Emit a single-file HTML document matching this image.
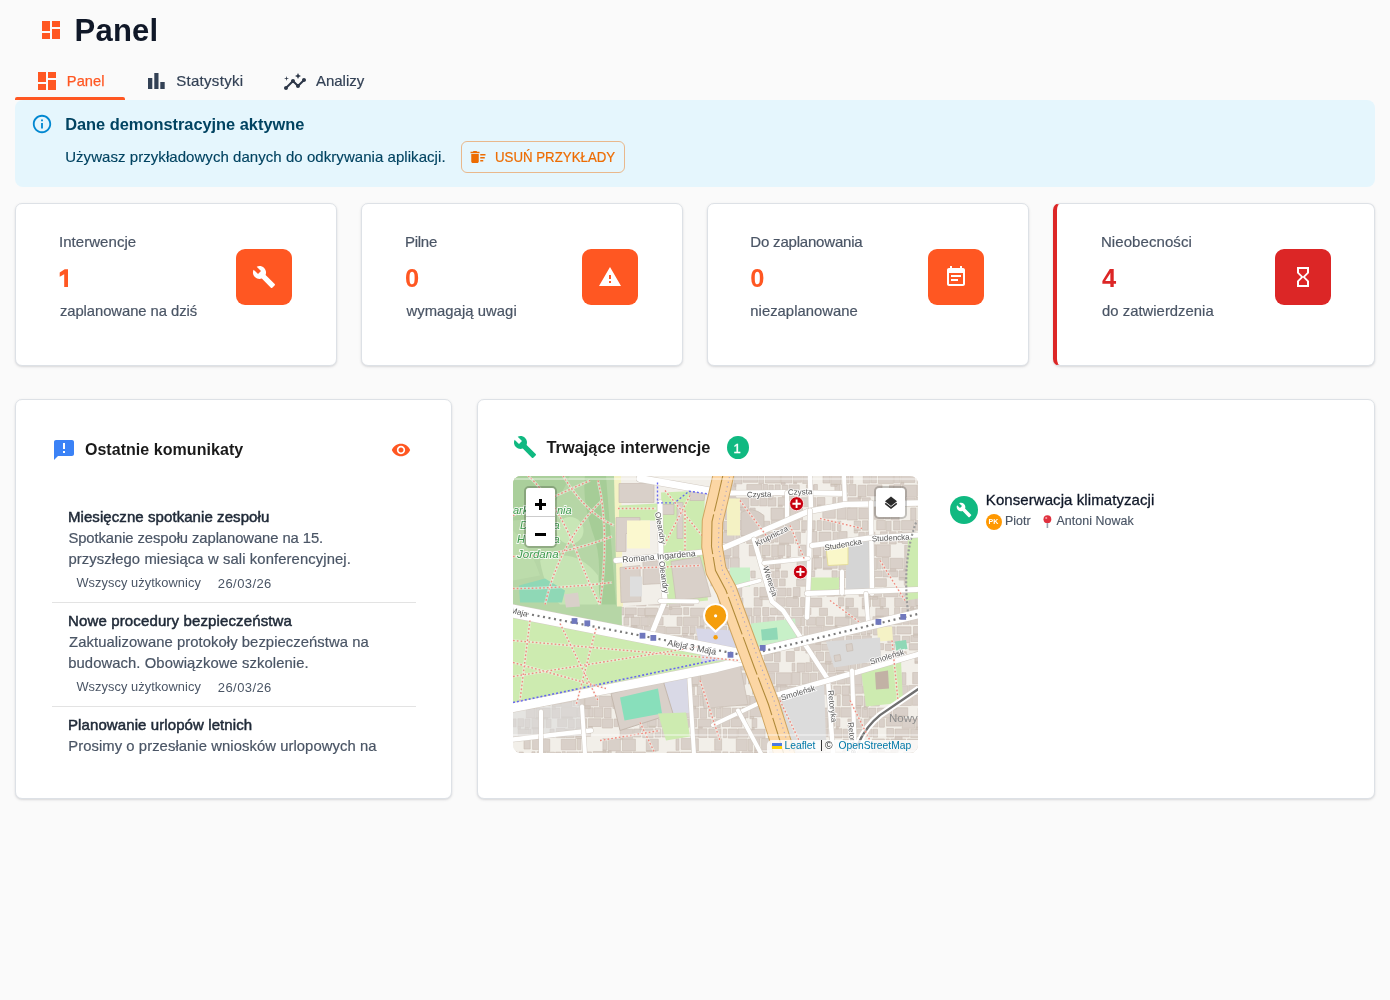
<!DOCTYPE html>
<html><head><meta charset="utf-8"><title>Panel</title>
<style>
html,body{margin:0;padding:0}
body{width:1390px;height:1000px;background:#fafafa;position:relative;overflow:hidden;font-family:"Liberation Sans",sans-serif}
.t,.mt{position:absolute;line-height:1;white-space:nowrap}
.abs{position:absolute;box-sizing:border-box}
.ic{position:absolute;display:block}
.card{position:absolute;box-sizing:border-box;background:#fff;border:1px solid #dde1e6;border-radius:7px;box-shadow:0 1px 3px rgba(16,24,40,0.10),0 1px 2px rgba(16,24,40,0.06)}
</style></head><body>
<div id="root" style="position:absolute;left:0;top:0;width:1390px;height:1000px;will-change:transform">
<svg class="ic" style="left:39px;top:18px" width="24" height="24" viewBox="0 0 24 24"><path fill="#ff5722" d="M3 13h8V3H3v10zm0 8h8v-6H3v6zm10 0h8V11h-8v10zm0-18v6h8V3h-8z"/></svg>
<div class="t" style="left:74.60px;top:14.75px;font-size:31px;color:#101828;font-weight:bold;letter-spacing:0.225px;">Panel</div>
<svg class="ic" style="left:35px;top:69px" width="24" height="24" viewBox="0 0 24 24"><path fill="#ff5722" d="M3 13h8V3H3v10zm0 8h8v-6H3v6zm10 0h8V11h-8v10zm0-18v6h8V3h-8z"/></svg>
<div class="t" style="left:66.80px;top:73.64px;font-size:14.6px;color:#ff5722;font-weight:normal;letter-spacing:0.113px;-webkit-text-stroke:0.25px #ff5722;">Panel</div>
<svg class="ic" style="left:148px;top:72.5px" width="17" height="16" viewBox="0 0 17 16"><path fill="#334155" d="M0 5.1h4.3V16H0zM6.3 0h4.2v16H6.3zM12.3 9.1h4.4V16h-4.4z"/></svg>
<div class="t" style="left:176.20px;top:73.30px;font-size:15px;color:#334155;font-weight:normal;letter-spacing:0.300px;-webkit-text-stroke:0.2px #334155;">Statystyki</div>
<svg class="ic" style="left:283px;top:69.6px" width="24" height="24" viewBox="0 0 24 24"><path fill="#2d3748" d="M21 8c-1.45 0-2.26 1.44-1.93 2.51l-3.55 3.56c-.3-.09-.74-.09-1.04 0l-2.55-2.55C12.27 10.45 11.46 9 10 9c-1.45 0-2.27 1.44-1.93 2.52l-4.56 4.55C2.44 15.74 1 16.55 1 18c0 1.1.9 2 2 2 1.45 0 2.26-1.44 1.93-2.51l4.55-4.56c.3.09.74.09 1.04 0l2.55 2.55C12.73 16.55 13.54 18 15 18c1.45 0 2.27-1.44 1.93-2.52l3.56-3.55c1.07.33 2.51-.49 2.51-1.93 0-1.1-.9-2-2-2zM15 9l.94-2.07L18 6l-2.06-.93L15 3l-.92 2.07L12 6l2.08.93zM3.5 11 4 9l2-.5L4 8l-.5-2L3 8l-2 .5L3 9z"/></svg>
<div class="t" style="left:315.90px;top:73.10px;font-size:15px;color:#334155;font-weight:normal;-webkit-text-stroke:0.2px #334155;">Analizy</div>
<div class="abs" style="left:15px;top:97px;width:109.5px;height:3px;background:#ff5722;border-radius:2px 2px 0 0"></div>
<div class="abs" style="left:15px;top:100px;width:1360px;height:86.7px;background:#e5f6fd;border-radius:8px"></div>
<svg class="ic" style="left:31px;top:113px" width="22" height="22" viewBox="0 0 24 24"><path fill="#0288d1" d="M11 7h2v2h-2zm0 4h2v6h-2zm1-9C6.48 2 2 6.48 2 12s4.48 10 10 10 10-4.48 10-10S17.52 2 12 2zm0 18c-4.41 0-8-3.59-8-8s3.59-8 8-8 8 3.59 8 8-3.59 8-8 8z"/></svg>
<div class="t" style="left:65.20px;top:116.11px;font-size:16.4px;color:#014361;font-weight:bold;letter-spacing:-0.017px;">Dane demonstracyjne aktywne</div>
<div class="t" style="left:65.20px;top:149.20px;font-size:15px;color:#014361;font-weight:normal;letter-spacing:0.052px;-webkit-text-stroke:0.15px #014361;">Używasz przykładowych danych do odkrywania aplikacji.</div>
<div class="abs" style="left:461px;top:141px;width:163.7px;height:31.6px;border:1px solid rgba(237,108,2,0.45);border-radius:6px"></div>
<svg class="ic" style="left:469px;top:148px" width="18" height="18" viewBox="0 0 24 24"><path fill="#ed6c02" d="M15 16h4v2h-4zm0-8h7v2h-7zm0 4h6v2h-6zM3 18c0 1.1.9 2 2 2h6c1.1 0 2-.9 2-2V8H3v10zM14 5h-3l-1-1H6L5 5H2v2h12z"/></svg>
<div class="t" style="left:495.30px;top:150.18px;font-size:14.2px;color:#ed6c02;font-weight:normal;-webkit-text-stroke:0.2px #ed6c02;transform:scaleX(0.935);transform-origin:0 0;">USUŃ PRZYKŁADY</div>
<div class="card" style="left:15px;top:203px;width:322px;height:163px;"></div>
<div class="t" style="left:59.00px;top:234.20px;font-size:15px;color:#4a5565;font-weight:normal;letter-spacing:0.045px;-webkit-text-stroke:0.2px #4a5565;">Interwencje</div>
<div class="t" style="display:none">1</div>
<svg class="ic" style="left:0;top:0" width="100" height="300" viewBox="0 0 100 300"><path fill="#ff5722" d="M64.2 269.2H68V287.1H64.2V274.2L59.7 276.7V272.6L64.7 269.2Z"/></svg>
<div class="t" style="left:59.90px;top:304.17px;font-size:14.8px;color:#4a5565;font-weight:normal;letter-spacing:-0.050px;-webkit-text-stroke:0.2px #4a5565;">zaplanowane na dziś</div>
<div class="abs" style="left:235.70px;top:248.7px;width:56px;height:56px;border-radius:9px;background:#ff5722"></div>
<svg class="ic" style="left:251.70px;top:264.7px" width="24" height="24" viewBox="0 0 24 24"><path fill="#fff" d="M22.7 19l-9.1-9.1c.9-2.3.4-5-1.5-6.9-2-2-5-2.4-7.4-1.3L9 6 6 9 1.6 4.7C.4 7.1.9 10.1 2.9 12.1c1.9 1.9 4.6 2.4 6.9 1.5l9.1 9.1c.4.4 1 .4 1.4 0l2.3-2.3c.5-.4.5-1.1.1-1.4z"/></svg>
<div class="card" style="left:361.2px;top:203px;width:322px;height:163px;"></div>
<div class="t" style="left:404.88px;top:234.20px;font-size:15px;color:#4a5565;font-weight:normal;letter-spacing:-0.225px;-webkit-text-stroke:0.2px #4a5565;">Pilne</div>
<div class="t" style="left:404.88px;top:265.51px;font-size:25.5px;color:#ff5722;font-weight:bold;">0</div>
<div class="t" style="left:406.41px;top:304.17px;font-size:14.8px;color:#4a5565;font-weight:normal;letter-spacing:0.069px;-webkit-text-stroke:0.2px #4a5565;">wymagają uwagi</div>
<div class="abs" style="left:582.03px;top:248.7px;width:56px;height:56px;border-radius:9px;background:#ff5722"></div>
<svg class="ic" style="left:598.03px;top:264.7px" width="24" height="24" viewBox="0 0 24 24"><path fill="#fff" d="M1 21h22L12 2 1 21zm12-3h-2v-2h2v2zm0-4h-2v-4h2v4z"/></svg>
<div class="card" style="left:706.5px;top:203px;width:322px;height:163px;"></div>
<div class="t" style="left:750.32px;top:234.20px;font-size:15px;color:#4a5565;font-weight:normal;letter-spacing:-0.193px;-webkit-text-stroke:0.2px #4a5565;">Do zaplanowania</div>
<div class="t" style="left:750.32px;top:265.51px;font-size:25.5px;color:#ff5722;font-weight:bold;">0</div>
<div class="t" style="left:750.32px;top:304.17px;font-size:14.8px;color:#4a5565;font-weight:normal;letter-spacing:0.035px;-webkit-text-stroke:0.2px #4a5565;">niezaplanowane</div>
<div class="abs" style="left:928.37px;top:248.7px;width:56px;height:56px;border-radius:9px;background:#ff5722"></div>
<svg class="ic" style="left:944.37px;top:264.7px" width="24" height="24" viewBox="0 0 24 24"><path fill="#fff" d="M17 10H7v2h10v-2zm2-7h-1V1h-2v2H8V1H6v2H5c-1.11 0-1.99.9-1.99 2L3 19c0 1.1.89 2 2 2h14c1.1 0 2-.9 2-2V5c0-1.1-.9-2-2-2zm0 16H5V8h14v11zm-5-5H7v2h7v-2z"/></svg>
<div class="card" style="left:1052.9px;top:203px;width:322.1px;height:163px;border-left:4px solid #dc2626;"></div>
<div class="t" style="left:1100.88px;top:234.20px;font-size:15px;color:#4a5565;font-weight:normal;letter-spacing:0.082px;-webkit-text-stroke:0.2px #4a5565;">Nieobecności</div>
<div class="t" style="left:1102.05px;top:265.51px;font-size:25.5px;color:#dc2626;font-weight:bold;">4</div>
<div class="t" style="left:1102.05px;top:304.17px;font-size:14.8px;color:#4a5565;font-weight:normal;letter-spacing:0.036px;-webkit-text-stroke:0.2px #4a5565;">do zatwierdzenia</div>
<div class="abs" style="left:1274.70px;top:248.7px;width:56px;height:56px;border-radius:9px;background:#dc2626"></div>
<svg class="ic" style="left:1290.70px;top:264.7px" width="24" height="24" viewBox="0 0 24 24"><path fill="#fff" d="M6 2v6h.01L6 8.01 10 12l-4 4 .01.01H6V22h12v-5.99h-.01L18 16l-4-4 4-3.99-.01-.01H18V2H6zm10 14.5V20H8v-3.5l4-4 4 4zm-4-5l-4-4V4h8v3.5l-4 4z"/></svg>
<div class="card" style="left:15px;top:398.5px;width:437.33px;height:400px"></div>
<svg class="ic" style="left:52px;top:438px" width="24" height="24" viewBox="0 0 24 24"><path fill="#3b82f6" d="M20 2H4c-1.1 0-1.99.9-1.99 2L2 22l4-4h14c1.1 0 2-.9 2-2V4c0-1.1-.9-2-2-2zm-7 9h-2V5h2v6zm0 4h-2v-2h2v2z"/></svg>
<div class="t" style="left:84.90px;top:442.45px;font-size:16px;color:#1a1a1a;font-weight:bold;letter-spacing:0.050px;">Ostatnie komunikaty</div>
<svg class="ic" style="left:390.5px;top:440.4px" width="20" height="20" viewBox="0 0 24 24"><path fill="#ff5722" d="M12 4.5C7 4.5 2.73 7.61 1 12c1.73 4.39 6 7.5 11 7.5s9.27-3.11 11-7.5c-1.73-4.39-6-7.5-11-7.5zM12 17c-2.76 0-5-2.24-5-5s2.24-5 5-5 5 2.24 5 5-2.24 5-5 5zm0-8c-1.66 0-3 1.34-3 3s1.34 3 3 3 3-1.34 3-3-1.34-3-3-3z"/></svg>
<div class="abs" style="left:52px;top:490px;width:364px;height:268px;overflow:hidden">
<div class="t" style="left:15.93px;top:19.20px;font-size:15px;color:#1f2937;font-weight:normal;letter-spacing:0.077px;-webkit-text-stroke:0.5px #1f2937;">Miesięczne spotkanie zespołu</div>
<div class="t" style="left:16.38px;top:40.67px;font-size:14.8px;color:#4a5565;font-weight:normal;letter-spacing:-0.077px;-webkit-text-stroke:0.2px #4a5565;">Spotkanie zespołu zaplanowane na 15.</div>
<div class="t" style="left:16.38px;top:62.07px;font-size:14.8px;color:#4a5565;font-weight:normal;letter-spacing:0.110px;-webkit-text-stroke:0.2px #4a5565;">przyszłego miesiąca w sali konferencyjnej.</div>
<div class="t" style="left:24.45px;top:86.86px;font-size:12.8px;color:#4a5565;font-weight:normal;letter-spacing:0.075px;">Wszyscy użytkownicy</div>
<div class="t" style="left:165.84px;top:86.69px;font-size:13px;color:#4a5565;font-weight:normal;letter-spacing:0.411px;">26/03/26</div>
<div class="abs" style="left:0;top:111.5px;width:364px;height:1px;background:#e3e3e3"></div>
<div class="t" style="left:16.02px;top:123.20px;font-size:15px;color:#1f2937;font-weight:normal;letter-spacing:0.135px;-webkit-text-stroke:0.5px #1f2937;">Nowe procedury bezpieczeństwa</div>
<div class="t" style="left:17.10px;top:144.67px;font-size:14.8px;color:#4a5565;font-weight:normal;letter-spacing:0.066px;-webkit-text-stroke:0.2px #4a5565;">Zaktualizowane protokoły bezpieczeństwa na</div>
<div class="t" style="left:16.20px;top:166.07px;font-size:14.8px;color:#4a5565;font-weight:normal;letter-spacing:0.087px;-webkit-text-stroke:0.2px #4a5565;">budowach. Obowiązkowe szkolenie.</div>
<div class="t" style="left:24.45px;top:190.86px;font-size:12.8px;color:#4a5565;font-weight:normal;letter-spacing:0.075px;">Wszyscy użytkownicy</div>
<div class="t" style="left:165.84px;top:190.69px;font-size:13px;color:#4a5565;font-weight:normal;letter-spacing:0.411px;">26/03/26</div>
<div class="abs" style="left:0;top:215.5px;width:364px;height:1px;background:#e3e3e3"></div>
<div class="t" style="left:16.02px;top:227.20px;font-size:15px;color:#1f2937;font-weight:normal;letter-spacing:0.094px;-webkit-text-stroke:0.5px #1f2937;">Planowanie urlopów letnich</div>
<div class="t" style="left:16.20px;top:248.67px;font-size:14.8px;color:#4a5565;font-weight:normal;letter-spacing:0.075px;-webkit-text-stroke:0.2px #4a5565;">Prosimy o przesłanie wniosków urlopowych na</div>
<div class="t" style="left:16.20px;top:270.07px;font-size:14.8px;color:#4a5565;font-weight:normal;-webkit-text-stroke:0.2px #4a5565;">do końca kwietnia.</div>
<div class="t" style="left:24.00px;top:294.86px;font-size:12.8px;color:#4a5565;font-weight:normal;">Wszyscy użytkownicy</div>
<div class="t" style="left:165.30px;top:294.69px;font-size:13px;color:#4a5565;font-weight:normal;">26/03/26</div>
</div>
<div class="card" style="left:476.67px;top:398.5px;width:898.67px;height:400px"></div>
<svg class="ic" style="left:513px;top:435px" width="24" height="24" viewBox="0 0 24 24"><path fill="#10b981" d="M22.7 19l-9.1-9.1c.9-2.3.4-5-1.5-6.9-2-2-5-2.4-7.4-1.3L9 6 6 9 1.6 4.7C.4 7.1.9 10.1 2.9 12.1c1.9 1.9 4.6 2.4 6.9 1.5l9.1 9.1c.4.4 1 .4 1.4 0l2.3-2.3c.5-.4.5-1.1.1-1.4z"/></svg>
<div class="t" style="left:546.40px;top:439.11px;font-size:16.4px;color:#1a1a1a;font-weight:bold;">Trwające interwencje</div>
<div class="abs" style="left:726.5px;top:435.5px;width:22px;height:23.5px;border-radius:50%;background:#10b981"></div>
<div class="t" style="left:733.60px;top:441.59px;font-size:13px;color:#fff;font-weight:normal;-webkit-text-stroke:0.35px #fff;">1</div>
<div class="abs" style="left:513px;top:475.5px;width:404.5px;height:277.5px;border-radius:8px;overflow:hidden;background:#f2efe9">
<svg width="404.5" height="277.5" viewBox="513 475.5 404.5 277.5" style="position:absolute;left:0;top:0;display:block">
<defs>
<pattern id="bld" x="0" y="0" width="44" height="38" patternUnits="userSpaceOnUse">
<rect width="44" height="38" fill="#f2eee8"/>
<path d="M1 1h14v5h-6v7H1zM17 1h9v9h-9zM28 1h6v4h4v9h-10zM40 1h3v12h-3zM1 15h7v10H1zM10 9h5v8h-5zM10 19h12v5H10zM17 12h9v5h-9zM28 16h6v12h-6zM36 15h7v7h-7zM36 24h7v13h-7zM1 27h10v10H1zM13 26h13v4h-6v7h-7zM22 32h12v5H22z" fill="#d9d0c9" stroke="#cdc2b8" stroke-width="0.7"/>
</pattern>
<pattern id="bld2" x="7" y="3" width="38" height="34" patternUnits="userSpaceOnUse">
<rect width="38" height="34" fill="#f1ede7"/>
<path d="M1 1h11v7H1zM14 1h5v13h-5zM21 1h16v5H21zM21 8h6v8h-6zM29 8h8v10h-8zM1 10h11v5H1zM1 17h5v16H1zM8 17h12v7H8zM22 18h5v15h-5zM29 20h8v6h-8zM29 28h8v5h-8zM8 26h12v7H8z" fill="#d9d0c9" stroke="#cdc2b8" stroke-width="0.7"/>
</pattern>
</defs>
<rect x="513" y="475.5" width="405" height="278" fill="#f2efe9"/>
<path d="M511.0 474.0h11.1v8.3h-11.1zM523.1 474.0h3.6v8.8h-3.6zM528.2 474.0h6.4v9.1h-6.4zM528.2 483.1h3.9v1.3h-3.9zM536.3 474.1h11.0v8.7h-11.0zM547.7 474.2h6.4v9.1h-6.4zM556.0 474.2h10.5v7.6h-10.5zM556.0 481.8h7.9v1.2h-7.9zM567.9 474.8h7.0v8.0h-7.0zM567.9 482.7h3.7v2.5h-3.7zM584.1 474.7h10.3v7.9h-10.3zM596.4 474.8h8.4v8.4h-8.4zM606.5 474.7h4.2v8.1h-4.2zM623.8 474.0h8.6v8.9h-8.6zM634.1 474.1h5.6v7.6h-5.6zM662.0 474.2h6.8v8.0h-6.8zM662.0 482.2h2.6v2.3h-2.6zM670.7 474.3h3.4v8.8h-3.4zM702.2 474.4h3.0v7.6h-3.0zM706.7 474.2h10.3v9.1h-10.3zM706.7 483.3h4.5v1.1h-4.5zM719.2 474.1h3.4v7.6h-3.4zM719.2 481.6h2.2v2.3h-2.2zM724.1 474.8h8.5v9.0h-8.5zM733.9 474.7h8.1v8.6h-8.1zM733.9 483.3h2.1v2.9h-2.1zM743.3 474.2h14.2v7.6h-14.2zM758.8 474.6h4.8v8.6h-4.8zM765.5 474.7h14.9v7.8h-14.9zM781.0 474.0h10.9v8.3h-10.9zM781.0 482.3h4.2v1.5h-4.2zM793.5 474.3h7.9v7.5h-7.9zM793.5 481.8h3.1v1.4h-3.1zM802.7 474.7h5.8v8.2h-5.8zM823.0 474.6h7.0v7.9h-7.0zM830.8 474.8h10.2v9.1h-10.2zM830.8 483.9h6.2v1.9h-6.2zM843.4 474.1h5.4v8.4h-5.4zM850.1 474.7h2.8v8.1h-2.8zM863.3 474.3h6.9v8.3h-6.9zM871.2 474.7h5.2v7.7h-5.2zM878.4 474.6h15.0v8.3h-15.0zM894.1 474.3h5.5v8.0h-5.5zM900.7 474.2h14.1v7.7h-14.1zM900.7 481.9h3.1v1.9h-3.1zM917.2 474.4h2.9v8.4h-2.9zM507.2 484.7h14.5v10.6h-14.5zM540.2 484.3h5.7v11.7h-5.7zM540.2 496.0h2.8v1.2h-2.8zM553.8 484.8h8.0v10.6h-8.0zM564.2 484.8h12.3v11.8h-12.3zM577.7 484.4h10.8v11.0h-10.8zM590.4 484.1h3.5v11.7h-3.5zM602.8 484.6h4.8v10.7h-4.8zM609.1 484.3h7.4v11.3h-7.4zM618.2 484.6h6.1v10.6h-6.1zM618.2 495.2h4.7v1.1h-4.7zM625.4 484.2h4.7v11.3h-4.7zM625.4 495.5h2.9v1.5h-2.9zM636.9 484.6h7.9v11.7h-7.9zM646.5 484.0h14.8v10.8h-14.8zM646.5 494.9h8.0v3.0h-8.0zM662.3 484.3h13.9v12.0h-13.9zM690.3 484.6h6.8v11.6h-6.8zM715.8 484.1h3.2v11.8h-3.2zM720.9 484.4h14.8v11.8h-14.8zM720.9 496.2h7.3v1.5h-7.3zM746.8 484.1h15.2v10.7h-15.2zM763.1 484.0h4.5v11.9h-4.5zM768.9 484.5h4.4v11.5h-4.4zM768.9 496.0h3.3v2.7h-3.3zM775.0 484.3h5.2v10.7h-5.2zM782.3 484.6h5.3v12.0h-5.3zM789.1 484.4h10.1v12.0h-10.1zM806.4 484.3h7.1v11.1h-7.1zM814.1 484.0h3.3v11.0h-3.3zM834.9 484.1h5.1v10.9h-5.1zM841.3 484.1h6.3v11.4h-6.3zM848.7 484.1h7.3v11.1h-7.3zM858.1 484.8h8.0v11.4h-8.0zM858.1 496.2h3.1v2.0h-3.1zM867.5 484.4h14.5v10.9h-14.5zM889.5 484.8h4.1v11.3h-4.1zM893.9 484.3h7.1v10.9h-7.1zM902.1 484.7h15.0v11.6h-15.0zM917.9 484.1h5.5v11.4h-5.5zM505.8 497.7h8.1v7.8h-8.1zM516.4 497.1h8.1v8.5h-8.1zM534.5 497.2h7.0v8.7h-7.0zM543.1 497.0h14.1v7.9h-14.1zM571.3 497.4h14.2v9.1h-14.2zM586.9 497.3h6.9v8.3h-6.9zM596.3 497.2h6.8v8.8h-6.8zM605.1 497.6h10.3v9.1h-10.3zM630.9 497.4h12.4v8.8h-12.4zM645.3 497.3h8.4v7.7h-8.4zM655.1 497.5h14.8v7.9h-14.8zM670.8 497.7h14.1v7.8h-14.1zM687.5 497.1h12.8v7.8h-12.8zM715.4 497.7h12.7v7.6h-12.7zM729.5 497.1h6.9v8.9h-6.9zM736.8 497.5h12.1v9.2h-12.1zM736.8 506.7h8.5v2.9h-8.5zM750.8 497.2h7.6v7.9h-7.6zM759.7 497.2h6.9v8.2h-6.9zM767.9 497.2h8.0v8.4h-8.0zM778.2 497.1h7.9v7.7h-7.9zM778.2 504.8h4.1v1.7h-4.1zM787.3 497.2h12.7v8.5h-12.7zM801.3 497.2h14.5v8.9h-14.5zM817.1 497.1h7.8v7.6h-7.8zM817.1 504.7h4.0v2.3h-4.0zM832.8 497.0h2.8v9.0h-2.8zM838.0 497.1h7.8v7.6h-7.8zM848.0 497.3h12.3v8.6h-12.3zM848.0 505.8h2.0v1.6h-2.0zM862.3 497.3h8.0v8.2h-8.0zM881.2 497.4h10.2v8.9h-10.2zM893.3 497.0h12.6v7.8h-12.6zM893.3 504.9h2.6v2.8h-2.6zM907.0 497.3h8.1v8.2h-8.1zM915.9 497.0h3.2v8.7h-3.2zM511.4 507.8h4.9v11.4h-4.9zM526.4 507.2h12.5v12.2h-12.5zM540.0 507.6h5.7v11.7h-5.7zM540.0 519.3h2.5v2.5h-2.5zM547.1 507.1h6.3v11.4h-6.3zM561.5 507.8h7.9v11.5h-7.9zM561.5 519.3h2.7v1.9h-2.7zM569.8 507.7h6.0v11.1h-6.0zM577.9 507.2h7.2v11.9h-7.2zM577.9 519.1h5.7v2.2h-5.7zM587.1 507.5h8.8v11.8h-8.8zM587.1 519.3h4.7v1.1h-4.7zM597.4 507.0h3.1v10.8h-3.1zM601.8 507.1h4.4v10.8h-4.4zM608.4 507.1h5.8v10.9h-5.8zM614.8 507.2h8.7v12.0h-8.7zM625.0 507.5h6.1v11.5h-6.1zM625.0 519.0h2.1v2.0h-2.1zM633.1 507.5h13.1v11.5h-13.1zM633.1 519.0h3.6v2.4h-3.6zM659.4 507.3h8.1v10.9h-8.1zM659.4 518.3h5.9v2.6h-5.9zM668.0 507.1h6.6v10.6h-6.6zM668.0 517.7h2.3v2.2h-2.3zM676.1 507.5h9.0v12.2h-9.0zM685.8 507.3h3.9v10.9h-3.9zM685.8 518.2h2.2v1.1h-2.2zM691.8 507.1h10.1v10.6h-10.1zM703.7 507.6h12.3v11.1h-12.3zM718.2 507.2h5.0v11.1h-5.0zM725.0 507.1h5.9v11.9h-5.9zM732.7 507.7h6.4v10.9h-6.4zM732.7 518.6h4.0v2.1h-4.0zM741.0 507.3h7.8v11.8h-7.8zM749.9 507.6h5.3v11.4h-5.3zM771.0 507.6h13.1v11.6h-13.1zM784.9 507.6h4.0v10.6h-4.0zM784.9 518.2h2.8v2.8h-2.8zM790.2 507.1h6.1v11.2h-6.1zM790.2 518.2h4.8v1.6h-4.8zM797.3 507.5h5.2v11.8h-5.2zM822.8 507.2h12.5v10.6h-12.5zM837.2 507.2h8.9v11.5h-8.9zM847.1 507.5h10.1v12.0h-10.1zM858.8 507.8h12.4v10.7h-12.4zM873.0 507.1h10.7v11.6h-10.7zM884.7 507.7h5.0v10.9h-5.0zM890.9 507.5h8.2v11.8h-8.2zM910.7 507.5h5.3v12.1h-5.3zM918.2 507.2h14.9v11.2h-14.9zM511.1 520.5h6.6v10.1h-6.6zM528.5 520.4h3.4v9.6h-3.4zM533.4 520.3h11.9v10.1h-11.9zM533.4 530.4h2.5v2.6h-2.5zM547.3 520.4h3.3v9.9h-3.3zM552.2 520.0h11.0v9.7h-11.0zM564.5 520.4h13.2v8.8h-13.2zM578.5 520.1h11.8v9.8h-11.8zM592.3 520.6h7.8v9.3h-7.8zM601.0 520.4h6.9v8.7h-6.9zM601.0 529.1h5.5v2.7h-5.5zM618.3 520.7h8.7v9.2h-8.7zM628.6 520.3h14.0v9.0h-14.0zM644.4 520.1h7.7v9.2h-7.7zM644.4 529.3h2.5v2.2h-2.5zM653.0 520.6h6.0v10.2h-6.0zM660.2 520.7h5.1v9.2h-5.1zM672.0 520.7h10.9v10.0h-10.9zM690.5 520.2h8.0v8.9h-8.0zM699.5 520.3h7.8v9.7h-7.8zM708.6 520.0h14.8v8.9h-14.8zM724.1 520.7h4.2v9.3h-4.2zM724.1 530.0h3.0v1.3h-3.0zM730.0 520.3h3.8v8.9h-3.8zM730.0 529.2h2.6v2.7h-2.6zM735.4 520.1h11.9v9.3h-11.9zM749.0 520.6h7.0v9.1h-7.0zM757.3 520.7h4.7v9.5h-4.7zM757.3 530.2h3.5v1.1h-3.5zM763.1 520.8h6.6v9.3h-6.6zM771.4 520.0h12.4v9.0h-12.4zM785.5 520.1h14.0v9.1h-14.0zM801.7 520.2h8.0v9.4h-8.0zM801.7 529.6h3.5v2.4h-3.5zM810.4 520.3h4.8v9.0h-4.8zM810.4 529.2h3.8v1.5h-3.8zM817.1 520.1h4.3v9.9h-4.3zM823.0 520.2h7.9v9.1h-7.9zM832.1 520.8h3.0v9.5h-3.0zM837.5 520.7h3.4v9.5h-3.4zM854.2 520.5h6.3v9.4h-6.3zM854.2 529.9h3.4v2.6h-3.4zM862.4 520.3h5.6v9.4h-5.6zM876.7 520.0h8.7v9.4h-8.7zM886.2 520.7h4.9v9.9h-4.9zM893.6 520.4h6.5v9.1h-6.5zM901.6 520.1h12.2v9.5h-12.2zM915.0 520.1h8.8v9.6h-8.8zM509.5 531.8h9.0v11.7h-9.0zM519.2 531.6h11.0v10.6h-11.0zM519.2 542.3h7.1v2.4h-7.1zM531.8 531.4h5.3v10.8h-5.3zM538.8 531.2h14.1v11.4h-14.1zM563.5 531.5h5.1v10.8h-5.1zM570.5 531.7h12.3v11.1h-12.3zM584.9 531.4h3.4v11.6h-3.4zM589.4 531.5h3.9v12.1h-3.9zM594.4 531.3h6.6v10.9h-6.6zM602.9 531.2h3.9v10.9h-3.9zM608.3 531.1h14.0v11.1h-14.0zM624.9 531.6h5.4v11.4h-5.4zM624.9 542.9h2.4v2.2h-2.4zM631.6 531.2h3.8v11.0h-3.8zM636.7 531.5h9.9v12.1h-9.9zM636.7 543.6h6.2v2.4h-6.2zM648.8 531.1h9.1v11.4h-9.1zM648.8 542.5h4.5v1.3h-4.5zM664.9 531.2h8.1v11.3h-8.1zM674.9 531.3h7.0v11.7h-7.0zM702.4 531.5h12.7v11.7h-12.7zM716.6 531.3h3.4v11.5h-3.4zM716.6 542.8h2.0v2.6h-2.0zM721.9 531.5h12.3v10.9h-12.3zM735.8 531.1h4.3v11.4h-4.3zM735.8 542.5h2.0v2.5h-2.0zM741.6 531.2h3.0v10.9h-3.0zM746.7 531.7h11.2v11.2h-11.2zM758.6 531.7h15.0v10.8h-15.0zM774.7 531.1h3.4v10.5h-3.4zM779.3 531.0h14.3v11.8h-14.3zM779.3 542.9h9.7v1.2h-9.7zM795.4 531.5h5.0v11.4h-5.0zM808.8 531.1h8.2v10.7h-8.2zM819.0 531.6h11.9v11.8h-11.9zM819.0 543.3h2.1v2.3h-2.1zM833.0 531.7h4.8v11.2h-4.8zM838.7 531.1h8.4v11.5h-8.4zM858.8 531.8h5.6v11.5h-5.6zM865.8 531.7h9.1v10.5h-9.1zM880.5 531.3h6.8v11.8h-6.8zM889.4 531.3h6.8v12.2h-6.8zM898.0 531.1h4.0v10.7h-4.0zM902.3 531.4h13.9v11.6h-13.9zM918.4 531.0h6.2v10.5h-6.2zM506.7 544.4h8.2v11.5h-8.2zM515.9 544.4h4.4v10.7h-4.4zM521.8 544.3h6.9v11.9h-6.9zM530.0 544.4h10.0v11.8h-10.0zM541.7 544.3h8.1v11.9h-8.1zM551.7 544.5h3.9v10.7h-3.9zM551.7 555.2h2.8v1.6h-2.8zM562.4 544.1h6.1v11.9h-6.1zM562.4 555.9h3.8v2.7h-3.8zM569.9 544.5h12.0v10.7h-12.0zM584.0 544.5h4.4v11.1h-4.4zM613.3 544.4h5.9v10.6h-5.9zM613.3 555.0h4.6v1.5h-4.6zM621.3 544.1h14.3v10.5h-14.3zM637.8 544.1h6.8v11.2h-6.8zM645.6 544.6h7.7v11.6h-7.7zM654.4 544.7h2.9v10.8h-2.9zM654.4 555.5h1.0v2.2h-1.0zM669.5 544.0h4.9v10.6h-4.9zM669.5 554.6h3.8v1.6h-3.8zM676.4 544.0h6.3v12.0h-6.3zM714.7 544.2h7.9v12.2h-7.9zM723.3 544.8h7.8v10.7h-7.8zM723.3 555.4h6.3v2.3h-6.3zM732.8 544.8h6.0v12.0h-6.0zM749.3 544.6h6.8v10.7h-6.8zM757.6 544.6h3.5v11.3h-3.5zM762.4 544.5h7.6v10.6h-7.6zM762.4 555.1h2.8v2.5h-2.8zM771.7 544.4h6.1v12.1h-6.1zM778.4 544.2h6.3v11.1h-6.3zM778.4 555.4h4.3v2.0h-4.3zM786.8 544.8h3.7v11.7h-3.7zM786.8 556.5h2.3v2.5h-2.3zM798.3 544.6h7.4v10.5h-7.4zM807.3 544.3h2.9v10.6h-2.9zM807.3 554.8h1.0v2.7h-1.0zM813.0 544.2h8.0v11.2h-8.0zM813.0 555.5h5.6v1.9h-5.6zM823.0 544.2h3.4v12.2h-3.4zM823.0 556.3h2.0v1.5h-2.0zM827.4 544.7h2.9v10.9h-2.9zM832.9 544.6h12.2v12.0h-12.2zM832.9 556.6h3.1v2.0h-3.1zM846.9 544.4h15.0v12.0h-15.0zM846.9 556.4h4.7v2.3h-4.7zM863.0 544.3h13.0v10.8h-13.0zM876.5 544.3h13.8v12.1h-13.8zM904.7 544.8h8.0v12.1h-8.0zM509.0 557.5h8.9v11.6h-8.9zM509.0 569.2h4.5v1.8h-4.5zM519.5 557.0h12.1v10.7h-12.1zM541.9 557.1h7.1v12.1h-7.1zM541.9 569.2h3.0v1.1h-3.0zM551.3 557.8h4.3v12.0h-4.3zM557.1 557.4h7.4v10.6h-7.4zM566.4 557.2h10.8v10.9h-10.8zM578.2 557.4h6.9v11.0h-6.9zM585.9 557.4h13.2v11.6h-13.2zM600.0 557.4h10.7v10.7h-10.7zM620.8 557.7h6.1v11.9h-6.1zM629.4 557.4h3.0v11.6h-3.0zM634.0 557.5h5.3v12.0h-5.3zM641.6 557.2h14.0v10.6h-14.0zM657.2 557.1h6.1v11.5h-6.1zM664.3 557.3h5.1v10.7h-5.1zM671.2 557.5h12.7v11.6h-12.7zM685.2 557.1h3.0v11.4h-3.0zM690.5 557.3h5.7v11.8h-5.7zM713.0 557.4h3.8v10.7h-3.8zM718.1 557.3h10.5v11.0h-10.5zM730.0 557.3h9.2v12.1h-9.2zM763.6 557.3h10.6v11.1h-10.6zM775.5 557.4h4.8v10.5h-4.8zM775.5 567.9h3.6v2.4h-3.6zM797.0 557.7h10.5v10.8h-10.5zM809.6 557.5h3.4v11.6h-3.4zM809.6 569.1h2.1v2.6h-2.1zM814.1 557.1h7.4v10.6h-7.4zM814.1 567.7h2.1v1.4h-2.1zM823.2 557.1h14.0v10.7h-14.0zM823.2 567.8h8.6v1.3h-8.6zM838.9 557.4h15.1v12.0h-15.1zM855.4 557.3h11.1v12.2h-11.1zM867.5 557.8h9.2v11.1h-9.2zM867.5 568.9h3.2v2.2h-3.2zM877.6 557.4h3.0v11.2h-3.0zM881.9 557.0h7.0v11.2h-7.0zM890.2 557.8h12.4v10.6h-12.4zM890.2 568.3h5.6v2.4h-5.6zM903.8 557.7h6.6v11.0h-6.6zM903.8 568.7h2.6v1.8h-2.6zM917.5 557.3h7.7v11.6h-7.7zM507.8 570.3h8.7v6.4h-8.7zM517.6 570.2h4.0v6.0h-4.0zM522.7 570.3h5.5v5.8h-5.5zM522.7 576.1h3.0v2.3h-3.0zM530.2 570.5h6.5v6.9h-6.5zM538.0 570.3h7.6v5.5h-7.6zM554.1 570.6h5.1v5.8h-5.1zM554.1 576.4h3.5v1.3h-3.5zM560.2 570.3h4.1v6.9h-4.1zM565.1 570.2h3.9v5.8h-3.9zM570.8 570.3h5.0v6.0h-5.0zM583.8 570.3h5.2v6.1h-5.2zM591.0 570.1h12.0v6.6h-12.0zM591.0 576.7h10.2v2.5h-10.2zM605.1 570.1h3.3v6.5h-3.3zM610.2 570.5h14.3v6.9h-14.3zM664.8 570.7h4.8v5.9h-4.8zM682.9 570.7h7.1v5.6h-7.1zM691.1 570.7h12.3v6.8h-12.3zM705.2 570.2h13.1v6.0h-13.1zM718.8 570.3h6.9v7.1h-6.9zM718.8 577.4h3.2v1.3h-3.2zM726.9 570.4h12.9v6.8h-12.9zM741.0 570.2h9.0v6.0h-9.0zM751.1 570.5h4.1v6.9h-4.1zM768.6 570.7h5.2v6.4h-5.2zM774.8 570.4h4.6v7.0h-4.6zM781.3 570.4h6.1v6.4h-6.1zM797.7 570.4h7.5v6.5h-7.5zM797.7 576.9h6.2v2.3h-6.2zM806.6 570.3h8.1v5.9h-8.1zM806.6 576.2h3.9v2.9h-3.9zM832.0 570.3h5.2v6.7h-5.2zM838.8 570.7h8.7v6.3h-8.7zM838.8 576.9h2.2v2.1h-2.2zM860.8 570.5h6.5v6.9h-6.5zM860.8 577.4h4.4v1.3h-4.4zM869.2 570.4h12.6v5.5h-12.6zM869.2 575.9h5.6v1.1h-5.6zM882.9 570.3h14.8v6.1h-14.8zM899.1 570.3h11.9v6.9h-11.9zM899.1 577.2h9.1v2.4h-9.1zM912.9 570.4h6.4v6.3h-6.4zM511.3 578.2h5.1v7.1h-5.1zM517.1 578.7h8.3v7.7h-8.3zM517.1 586.4h3.0v2.4h-3.0zM527.3 578.8h13.0v7.2h-13.0zM541.0 578.7h6.6v8.0h-6.6zM549.0 578.5h4.0v7.1h-4.0zM554.9 578.4h6.9v7.2h-6.9zM569.3 578.7h5.0v7.3h-5.0zM575.0 578.8h14.0v7.5h-14.0zM591.0 578.3h4.1v8.1h-4.1zM591.0 586.4h2.7v1.4h-2.7zM596.9 578.8h8.0v6.7h-8.0zM596.9 585.4h2.6v2.5h-2.6zM606.5 578.5h8.2v7.6h-8.2zM616.1 578.4h4.5v7.3h-4.5zM621.9 578.7h8.4v6.8h-8.4zM632.6 578.4h7.2v8.2h-7.2zM641.3 578.2h12.1v7.9h-12.1zM667.6 578.0h7.2v6.8h-7.2zM676.5 578.1h5.5v8.1h-5.5zM695.6 578.4h5.6v7.8h-5.6zM701.9 578.1h13.9v7.2h-13.9zM718.1 578.3h12.5v6.6h-12.5zM731.9 578.1h6.6v6.5h-6.6zM740.1 578.5h8.1v6.5h-8.1zM767.1 578.6h10.3v7.6h-10.3zM779.4 578.4h5.8v6.9h-5.8zM796.6 578.6h10.2v7.1h-10.2zM808.0 578.7h5.8v7.9h-5.8zM816.0 578.1h10.4v7.7h-10.4zM828.6 578.1h7.4v7.1h-7.4zM828.6 585.1h6.1v2.2h-6.1zM837.5 578.3h6.8v7.6h-6.8zM871.4 578.2h15.0v7.7h-15.0zM904.3 578.1h4.2v6.6h-4.2zM910.4 578.0h9.2v7.7h-9.2zM920.4 578.3h3.7v6.9h-3.7zM506.7 587.8h11.1v8.2h-11.1zM537.3 587.1h8.3v8.0h-8.3zM537.3 595.0h2.8v2.5h-2.8zM547.6 587.7h4.7v8.6h-4.7zM547.6 596.3h3.7v2.1h-3.7zM553.7 587.6h6.8v8.0h-6.8zM577.3 587.2h12.7v8.3h-12.7zM591.8 587.2h4.1v8.6h-4.1zM603.7 587.2h5.4v8.9h-5.4zM617.4 587.7h5.7v8.0h-5.7zM617.4 595.7h4.5v2.8h-4.5zM624.1 587.6h10.7v7.7h-10.7zM624.1 595.3h7.0v1.8h-7.0zM636.8 587.8h8.4v8.5h-8.4zM646.2 587.3h7.2v8.0h-7.2zM654.2 587.5h10.8v7.5h-10.8zM654.2 595.0h8.7v2.7h-8.7zM682.2 587.3h8.2v7.7h-8.2zM691.7 587.6h13.1v7.9h-13.1zM691.7 595.5h9.8v1.9h-9.8zM717.8 587.1h7.1v8.9h-7.1zM726.6 587.1h15.1v8.9h-15.1zM754.1 587.1h3.9v8.1h-3.9zM759.8 587.1h10.2v9.1h-10.2zM759.8 596.2h8.9v2.9h-8.9zM771.2 587.6h14.9v8.0h-14.9zM787.1 587.8h4.0v7.6h-4.0zM793.3 587.1h6.8v8.9h-6.8zM793.3 596.0h3.9v1.8h-3.9zM817.5 587.4h7.2v8.1h-7.2zM826.8 587.3h7.8v8.5h-7.8zM835.2 587.4h9.9v8.1h-9.9zM859.1 587.6h7.1v8.1h-7.1zM867.3 587.8h14.3v8.3h-14.3zM867.3 596.0h10.4v2.7h-10.4zM883.7 587.6h14.4v8.6h-14.4zM899.5 587.5h8.6v8.3h-8.6zM909.3 587.7h13.9v7.9h-13.9zM508.7 597.3h11.8v9.1h-11.8zM508.7 606.4h3.5v1.7h-3.5zM522.9 597.7h5.3v8.9h-5.3zM529.5 597.3h3.7v7.7h-3.7zM534.5 597.4h10.7v7.8h-10.7zM534.5 605.2h5.0v3.0h-5.0zM546.7 597.1h4.5v7.8h-4.5zM552.6 597.6h8.3v8.1h-8.3zM562.3 597.6h14.4v9.1h-14.4zM578.6 597.4h8.8v8.5h-8.8zM578.6 605.8h2.7v2.9h-2.7zM588.5 597.3h7.7v9.1h-7.7zM606.4 597.5h10.1v8.6h-10.1zM626.2 597.4h8.9v7.7h-8.9zM636.2 597.5h9.9v7.9h-9.9zM648.3 597.1h12.6v7.5h-12.6zM662.7 597.3h5.0v8.1h-5.0zM662.7 605.4h3.4v2.1h-3.4zM669.2 597.7h11.0v8.8h-11.0zM669.2 606.5h2.7v2.5h-2.7zM681.5 597.0h12.2v8.0h-12.2zM719.3 597.4h5.9v7.5h-5.9zM726.6 597.4h4.8v7.7h-4.8zM732.5 597.4h3.9v8.6h-3.9zM737.5 597.4h5.4v8.6h-5.4zM754.2 597.3h7.9v8.3h-7.9zM776.3 597.2h8.9v8.5h-8.9zM786.3 597.1h12.2v8.9h-12.2zM800.6 597.1h4.0v9.1h-4.0zM806.7 597.6h15.0v8.8h-15.0zM838.5 597.2h5.2v8.3h-5.2zM838.5 605.5h2.1v1.4h-2.1zM845.8 597.7h7.6v8.5h-7.6zM845.8 606.2h2.7v1.9h-2.7zM862.3 597.4h8.2v8.7h-8.2zM862.3 606.1h6.9v2.3h-6.9zM872.6 597.2h7.2v8.6h-7.2zM880.4 597.3h5.0v8.9h-5.0zM880.4 606.2h2.7v2.3h-2.7zM894.7 597.4h14.8v8.6h-14.8zM910.6 597.6h4.8v8.7h-4.8zM910.6 606.3h2.9v2.5h-2.9zM916.2 597.0h6.8v8.2h-6.8zM916.2 605.2h2.6v1.6h-2.6zM507.1 607.7h12.7v7.6h-12.7zM521.1 607.3h14.2v8.0h-14.2zM521.1 615.3h2.4v2.2h-2.4zM537.3 607.3h11.0v7.2h-11.0zM549.0 607.5h5.3v8.0h-5.3zM556.1 607.4h8.1v6.7h-8.1zM565.0 607.2h4.9v7.2h-4.9zM571.2 607.7h7.9v8.0h-7.9zM580.6 607.5h3.9v7.4h-3.9zM586.8 607.3h7.0v6.8h-7.0zM594.5 607.2h4.0v8.1h-4.0zM600.5 607.8h15.1v7.8h-15.1zM600.5 615.6h9.5v2.4h-9.5zM616.7 607.0h7.1v7.4h-7.1zM625.1 607.4h11.2v6.9h-11.2zM625.1 614.3h8.5v2.5h-8.5zM637.8 607.8h6.9v7.6h-6.9zM645.1 607.5h12.5v7.6h-12.5zM645.1 615.1h10.2v1.1h-10.2zM659.3 607.1h9.1v7.0h-9.1zM669.7 607.6h12.0v6.6h-12.0zM683.7 607.2h5.0v6.9h-5.0zM690.6 607.6h14.3v8.1h-14.3zM706.7 607.5h6.4v7.2h-6.4zM714.5 607.8h3.1v6.9h-3.1zM731.5 607.7h6.0v7.6h-6.0zM739.7 607.4h3.4v6.6h-3.4zM744.3 607.7h7.7v7.8h-7.7zM753.7 607.3h6.8v7.9h-6.8zM762.7 607.1h6.2v8.1h-6.2zM770.5 607.7h5.9v6.7h-5.9zM777.5 607.7h12.0v6.9h-12.0zM791.8 607.4h11.2v7.9h-11.2zM803.6 607.6h7.3v6.5h-7.3zM819.4 607.8h8.1v7.1h-8.1zM845.7 607.7h12.2v8.2h-12.2zM845.7 615.9h5.5v1.6h-5.5zM875.8 607.7h12.7v8.0h-12.7zM875.8 615.7h7.7v2.2h-7.7zM894.6 607.2h5.3v7.7h-5.3zM901.8 607.5h10.6v8.1h-10.6zM913.5 607.7h8.8v7.9h-8.8zM511.0 616.1h6.0v8.9h-6.0zM518.7 616.6h2.8v7.9h-2.8zM523.4 616.2h12.8v8.5h-12.8zM538.1 616.5h10.5v9.0h-10.5zM549.5 616.6h10.1v8.7h-10.1zM578.1 616.4h10.8v8.6h-10.8zM590.0 616.5h4.1v9.1h-4.1zM595.8 616.6h8.9v9.1h-8.9zM623.9 616.6h4.8v8.1h-4.8zM631.1 616.6h8.5v8.6h-8.5zM631.1 625.2h6.0v1.8h-6.0zM640.7 616.4h7.7v9.1h-7.7zM649.6 616.7h6.6v8.2h-6.6zM657.8 616.7h5.3v7.9h-5.3zM677.1 616.6h5.0v8.5h-5.0zM683.4 616.5h14.9v8.8h-14.9zM700.0 616.3h4.2v9.1h-4.2zM700.0 625.3h2.8v1.3h-2.8zM705.8 616.0h6.8v8.2h-6.8zM714.6 616.3h12.9v8.1h-12.9zM729.1 616.5h6.1v8.7h-6.1zM736.7 616.1h7.2v8.3h-7.2zM744.8 616.2h4.6v8.3h-4.6zM751.2 616.1h2.9v8.6h-2.9zM755.9 616.2h4.8v7.7h-4.8zM763.0 616.4h4.8v8.9h-4.8zM768.5 616.6h6.2v7.9h-6.2zM776.9 616.6h6.9v7.6h-6.9zM776.9 624.2h2.8v1.0h-2.8zM785.9 616.8h14.7v8.9h-14.7zM801.4 616.6h3.2v8.5h-3.2zM806.7 616.8h9.0v7.9h-9.0zM816.4 616.5h8.0v9.0h-8.0zM826.5 616.2h6.3v7.6h-6.3zM835.0 616.7h14.2v8.5h-14.2zM835.0 625.2h2.1v1.4h-2.1zM851.0 616.4h15.2v7.8h-15.2zM851.0 624.2h12.8v2.1h-12.8zM872.9 616.2h8.0v8.4h-8.0zM872.9 624.5h6.5v1.8h-6.5zM882.7 616.5h4.0v7.6h-4.0zM889.1 616.1h12.4v8.0h-12.4zM902.8 616.1h6.5v7.7h-6.5zM910.5 616.3h10.9v7.5h-10.9zM508.8 626.4h2.9v7.9h-2.9zM514.3 626.3h7.1v7.3h-7.1zM514.3 633.6h3.9v2.0h-3.9zM521.9 626.4h4.0v8.0h-4.0zM528.5 626.0h8.1v6.7h-8.1zM538.3 626.6h15.1v7.2h-15.1zM554.3 626.4h3.3v7.4h-3.3zM554.3 633.9h2.1v2.0h-2.1zM559.3 626.8h12.2v6.9h-12.2zM573.4 626.7h4.7v8.0h-4.7zM579.0 626.4h4.8v7.7h-4.8zM584.9 626.6h9.2v8.1h-9.2zM595.3 626.2h13.8v6.6h-13.8zM617.5 626.3h4.2v7.0h-4.2zM621.9 626.6h5.8v7.8h-5.8zM629.6 626.5h4.1v7.4h-4.1zM633.8 626.2h8.9v7.5h-8.9zM644.1 626.1h8.1v7.8h-8.1zM644.1 633.9h2.2v2.7h-2.2zM654.6 626.1h10.7v7.3h-10.7zM666.2 626.6h13.9v6.6h-13.9zM682.4 626.3h6.1v6.7h-6.1zM682.4 633.0h5.0v2.2h-5.0zM690.0 626.2h5.2v6.9h-5.2zM690.0 633.1h3.5v1.4h-3.5zM696.9 626.1h7.3v6.9h-7.3zM696.9 633.0h3.7v1.2h-3.7zM706.2 626.6h5.1v8.1h-5.1zM711.9 626.1h14.8v6.9h-14.8zM728.5 626.7h11.0v6.5h-11.0zM750.0 626.3h3.1v8.0h-3.1zM766.0 626.0h5.3v7.7h-5.3zM773.0 626.1h3.3v7.2h-3.3zM773.0 633.3h2.2v1.3h-2.2zM778.4 626.2h8.2v8.0h-8.2zM787.9 626.6h14.0v6.7h-14.0zM804.1 626.3h3.9v7.8h-3.9zM809.1 626.3h13.2v8.0h-13.2zM823.4 626.1h13.0v7.4h-13.0zM823.4 633.5h6.8v1.3h-6.8zM837.0 626.4h7.1v7.9h-7.1zM837.0 634.2h3.4v1.1h-3.4zM845.5 626.8h14.2v7.2h-14.2zM861.2 626.4h4.6v8.1h-4.6zM867.2 626.6h4.8v6.6h-4.8zM867.2 633.2h2.8v1.6h-2.8zM873.4 626.4h6.1v8.1h-6.1zM880.8 626.4h14.3v7.3h-14.3zM896.9 626.3h14.1v7.1h-14.1zM913.5 626.1h8.0v7.6h-8.0zM913.5 633.7h5.0v2.8h-5.0zM507.9 635.3h2.8v5.8h-2.8zM507.9 641.0h1.0v1.1h-1.0zM512.9 635.4h4.2v5.6h-4.2zM517.9 635.4h12.9v5.7h-12.9zM531.7 635.1h11.8v5.9h-11.8zM546.4 635.1h3.1v6.8h-3.1zM550.9 635.4h12.4v6.5h-12.4zM565.2 635.7h11.0v6.3h-11.0zM565.2 642.0h3.9v1.3h-3.9zM576.9 635.1h12.8v6.2h-12.8zM591.5 635.7h10.6v5.8h-10.6zM591.5 641.5h7.7v1.4h-7.7zM603.3 635.5h5.5v5.8h-5.5zM610.2 635.3h4.5v6.3h-4.5zM616.2 635.1h15.1v5.7h-15.1zM631.9 635.7h7.6v5.6h-7.6zM641.3 635.0h3.5v6.1h-3.5zM646.5 635.1h5.7v5.5h-5.7zM652.9 635.6h13.9v5.7h-13.9zM668.9 635.2h13.0v6.8h-13.0zM668.9 642.0h3.4v1.8h-3.4zM683.0 635.4h10.5v6.4h-10.5zM695.2 635.6h10.1v6.0h-10.1zM721.9 635.6h6.2v5.6h-6.2zM730.2 635.6h8.1v6.4h-8.1zM730.2 642.0h6.6v2.2h-6.6zM738.7 635.1h10.8v7.1h-10.8zM751.3 635.2h4.0v5.7h-4.0zM751.3 640.9h2.1v1.2h-2.1zM756.0 635.3h6.7v6.3h-6.7zM763.9 635.1h6.9v6.8h-6.9zM763.9 641.8h5.8v1.3h-5.8zM773.4 635.4h8.5v6.9h-8.5zM773.4 642.3h2.8v2.4h-2.8zM782.8 635.4h11.2v6.7h-11.2zM782.8 642.0h3.2v2.6h-3.2zM794.8 635.5h12.1v6.8h-12.1zM809.4 635.4h4.9v6.8h-4.9zM815.7 635.6h14.5v6.0h-14.5zM815.7 641.5h5.3v2.3h-5.3zM831.9 635.5h11.9v6.9h-11.9zM846.3 635.5h5.6v6.6h-5.6zM853.3 635.3h7.5v6.7h-7.5zM862.4 635.4h9.0v5.6h-9.0zM862.4 641.0h2.7v2.0h-2.7zM887.8 635.3h12.1v7.0h-12.1zM902.4 635.8h7.5v6.4h-7.5zM910.9 635.0h8.1v6.0h-8.1zM509.3 643.1h7.0v5.6h-7.0zM518.4 643.3h4.1v5.9h-4.1zM518.4 649.3h2.4v1.2h-2.4zM523.2 643.6h2.9v6.1h-2.9zM528.1 643.6h14.6v6.8h-14.6zM543.9 643.2h8.9v5.5h-8.9zM554.1 643.4h9.9v6.2h-9.9zM566.5 643.4h4.9v6.4h-4.9zM572.9 643.7h3.5v5.5h-3.5zM578.3 643.0h5.0v6.0h-5.0zM578.3 649.1h2.5v1.7h-2.5zM585.1 643.7h6.9v5.6h-6.9zM602.9 643.2h7.7v6.6h-7.7zM612.6 643.7h10.1v6.2h-10.1zM629.3 643.3h5.1v6.8h-5.1zM635.9 643.7h5.2v6.1h-5.2zM635.9 649.8h2.7v2.5h-2.7zM643.3 643.4h15.1v5.7h-15.1zM659.1 643.2h12.0v6.8h-12.0zM659.1 650.0h4.9v1.1h-4.9zM673.4 643.2h4.1v7.1h-4.1zM678.3 643.7h10.5v6.6h-10.5zM700.3 643.8h7.7v5.6h-7.7zM709.4 643.2h4.6v5.7h-4.6zM725.3 643.0h4.4v6.4h-4.4zM725.3 649.4h3.4v1.4h-3.4zM739.9 643.3h8.1v6.2h-8.1zM750.2 643.3h10.3v7.1h-10.3zM762.2 643.5h14.9v6.3h-14.9zM762.2 649.8h13.4v3.0h-13.4zM794.4 643.7h4.9v6.3h-4.9zM801.5 643.7h4.2v6.3h-4.2zM805.9 643.4h15.0v6.8h-15.0zM805.9 650.2h3.6v2.4h-3.6zM821.9 643.6h7.9v6.1h-7.9zM831.2 643.1h5.9v6.8h-5.9zM846.0 643.7h4.2v6.0h-4.2zM852.5 643.7h4.2v5.7h-4.2zM857.6 643.3h10.6v6.1h-10.6zM877.1 643.1h6.6v6.1h-6.6zM877.1 649.3h2.3v1.4h-2.3zM885.5 643.6h8.8v6.5h-8.8zM909.2 643.2h12.5v6.3h-12.5zM511.4 651.7h10.2v9.6h-10.2zM537.1 651.5h14.0v9.0h-14.0zM564.8 651.5h7.3v8.9h-7.3zM574.1 651.8h10.4v9.0h-10.4zM586.5 651.8h10.8v10.0h-10.8zM597.8 651.4h12.8v9.3h-12.8zM612.1 651.5h8.5v9.6h-8.5zM622.5 651.5h7.1v10.1h-7.1zM622.5 661.6h5.6v1.6h-5.6zM631.0 651.0h12.2v10.2h-12.2zM644.9 651.8h5.9v9.5h-5.9zM657.9 651.7h13.8v8.9h-13.8zM657.9 660.6h7.4v2.5h-7.4zM674.3 651.8h10.0v8.9h-10.0zM674.3 660.7h2.4v1.2h-2.4zM686.2 651.1h3.2v9.9h-3.2zM686.2 661.0h2.1v2.9h-2.1zM691.1 651.2h5.8v9.5h-5.8zM691.1 660.7h4.8v3.0h-4.8zM699.3 651.5h5.0v8.9h-5.0zM705.8 651.4h3.4v8.7h-3.4zM705.8 660.0h2.3v2.3h-2.3zM731.9 651.5h14.5v9.0h-14.5zM764.4 651.3h8.3v9.2h-8.3zM774.5 651.6h5.7v9.7h-5.7zM786.3 651.1h8.1v9.8h-8.1zM810.1 651.1h4.0v10.1h-4.0zM815.9 651.6h7.6v8.6h-7.6zM815.9 660.2h3.3v1.2h-3.3zM825.4 651.5h10.2v9.8h-10.2zM825.4 661.3h5.5v2.4h-5.5zM837.0 651.4h6.8v8.9h-6.8zM845.4 651.4h14.4v8.8h-14.4zM860.8 651.7h10.2v8.6h-10.2zM873.4 651.1h6.8v9.3h-6.8zM893.9 651.7h8.2v9.4h-8.2zM902.9 651.2h3.4v8.7h-3.4zM914.9 651.7h4.0v9.8h-4.0zM914.9 661.5h2.9v1.4h-2.9zM511.3 662.1h5.8v8.7h-5.8zM518.7 662.0h12.6v8.4h-12.6zM532.7 662.4h12.5v8.9h-12.5zM532.7 671.3h5.0v2.8h-5.0zM553.9 662.6h12.8v8.6h-12.8zM567.6 662.8h6.1v8.6h-6.1zM583.7 662.4h11.0v7.9h-11.0zM596.0 662.3h12.4v7.6h-12.4zM609.8 662.5h6.0v8.1h-6.0zM617.6 662.1h6.4v8.5h-6.4zM625.7 662.1h4.9v9.0h-4.9zM625.7 671.1h3.1v2.3h-3.1zM631.7 662.5h7.6v7.6h-7.6zM631.7 670.0h3.9v2.8h-3.9zM656.7 662.2h2.8v7.7h-2.8zM656.7 669.8h1.0v2.2h-1.0zM678.1 662.8h10.2v9.1h-10.2zM678.1 671.9h7.4v1.5h-7.4zM689.5 662.0h5.0v9.2h-5.0zM696.9 662.3h15.0v8.0h-15.0zM712.6 662.6h8.0v8.9h-8.0zM712.6 671.6h3.5v2.1h-3.5zM721.5 662.0h4.6v8.3h-4.6zM735.5 662.4h3.0v8.8h-3.0zM741.3 662.0h9.1v7.5h-9.1zM759.1 662.3h5.8v7.9h-5.8zM759.1 670.2h4.1v1.1h-4.1zM765.7 662.7h13.0v8.7h-13.0zM792.1 662.7h2.8v8.0h-2.8zM797.1 662.6h7.7v9.0h-7.7zM805.8 662.2h5.9v8.8h-5.9zM812.9 662.2h7.1v8.5h-7.1zM820.8 662.6h6.3v8.8h-6.3zM828.7 662.5h6.1v8.9h-6.1zM835.9 662.4h13.1v7.6h-13.1zM835.9 670.0h7.9v2.8h-7.9zM850.0 662.6h5.5v9.0h-5.5zM857.1 662.2h3.1v9.1h-3.1zM857.1 671.3h2.1v1.5h-2.1zM861.7 662.8h5.7v8.0h-5.7zM868.7 662.7h3.4v8.5h-3.4zM874.0 662.0h8.0v8.6h-8.0zM874.0 670.6h3.8v2.7h-3.8zM510.0 672.3h14.5v11.4h-14.5zM525.7 672.3h6.3v12.0h-6.3zM534.3 672.6h3.8v10.9h-3.8zM539.1 672.2h6.0v11.3h-6.0zM546.9 672.4h3.5v11.0h-3.5zM552.2 672.7h8.1v11.6h-8.1zM561.3 672.2h10.3v11.1h-10.3zM561.3 683.3h4.6v1.1h-4.6zM588.8 672.6h7.9v11.6h-7.9zM597.7 672.1h12.9v10.7h-12.9zM624.2 672.6h13.0v11.9h-13.0zM643.1 672.2h6.0v10.7h-6.0zM651.1 672.8h9.0v11.7h-9.0zM661.3 672.1h3.9v10.9h-3.9zM665.7 672.5h5.3v11.9h-5.3zM672.9 672.4h7.2v10.8h-7.2zM682.4 672.1h8.4v11.3h-8.4zM692.0 672.7h6.8v11.5h-6.8zM692.0 684.2h5.7v1.5h-5.7zM699.7 672.6h10.4v11.6h-10.4zM711.7 672.5h7.2v11.4h-7.2zM721.0 672.6h5.0v11.3h-5.0zM721.0 683.9h2.5v2.5h-2.5zM741.8 672.7h4.0v11.0h-4.0zM741.8 683.7h2.0v1.8h-2.0zM748.5 672.1h12.2v11.3h-12.2zM761.9 672.3h12.8v11.3h-12.8zM776.5 672.3h14.8v12.1h-14.8zM776.5 684.4h9.7v2.1h-9.7zM791.8 672.0h8.3v12.0h-8.3zM802.2 672.4h7.0v11.1h-7.0zM810.4 672.7h6.2v11.9h-6.2zM810.4 684.6h3.2v2.8h-3.2zM818.1 672.2h8.3v11.4h-8.3zM818.1 683.5h5.4v2.4h-5.4zM828.3 672.5h7.5v11.0h-7.5zM837.2 672.1h8.0v11.4h-8.0zM846.2 672.2h6.3v10.9h-6.3zM854.1 672.8h8.1v11.6h-8.1zM864.3 672.4h4.3v11.2h-4.3zM864.3 683.6h3.1v1.1h-3.1zM869.8 672.7h14.3v11.8h-14.3zM893.8 672.3h6.3v11.2h-6.3zM901.9 672.2h4.0v11.9h-4.0zM912.7 672.0h11.8v11.3h-11.8zM505.9 685.4h14.4v7.7h-14.4zM535.7 685.6h6.2v7.8h-6.2zM543.9 685.3h6.6v7.9h-6.6zM552.3 685.7h9.0v8.4h-9.0zM552.3 694.1h6.6v1.9h-6.6zM561.7 685.6h5.5v7.9h-5.5zM568.8 685.5h4.7v9.0h-4.7zM574.8 685.7h9.2v7.8h-9.2zM584.6 685.8h6.0v8.1h-6.0zM591.7 685.1h12.3v7.6h-12.3zM621.7 685.1h8.0v8.5h-8.0zM632.1 685.4h6.4v8.9h-6.4zM632.1 694.3h5.3v2.7h-5.3zM640.0 685.2h12.1v8.2h-12.1zM653.7 685.3h7.4v7.6h-7.4zM653.7 692.9h5.5v3.0h-5.5zM663.1 685.1h6.0v8.3h-6.0zM670.2 685.2h3.9v8.8h-3.9zM670.2 694.0h2.0v2.8h-2.0zM674.6 685.2h6.1v8.0h-6.1zM674.6 693.2h3.0v1.2h-3.0zM682.6 685.6h11.8v8.8h-11.8zM697.3 685.4h14.8v9.1h-14.8zM712.8 685.7h10.5v7.9h-10.5zM725.3 685.7h11.1v8.8h-11.1zM752.6 685.2h3.9v8.5h-3.9zM766.1 685.7h12.0v8.5h-12.0zM766.1 694.2h5.5v1.0h-5.5zM780.0 685.3h7.6v8.6h-7.6zM780.0 693.9h5.1v1.6h-5.1zM788.6 685.6h7.4v7.8h-7.4zM788.6 693.4h6.2v1.1h-6.2zM798.1 685.7h8.3v8.1h-8.3zM798.1 693.8h4.5v2.0h-4.5zM808.3 685.3h12.6v8.8h-12.6zM821.6 685.0h10.1v8.7h-10.1zM833.8 685.5h6.7v8.2h-6.7zM833.8 693.6h2.5v1.5h-2.5zM842.0 685.5h7.2v9.1h-7.2zM849.6 685.2h13.1v7.6h-13.1zM863.6 685.0h3.7v7.8h-3.7zM868.6 685.2h4.4v8.2h-4.4zM874.6 685.6h12.9v7.8h-12.9zM874.6 693.4h11.3v1.8h-11.3zM894.2 685.7h4.4v8.8h-4.4zM900.0 685.2h7.6v8.7h-7.6zM908.7 685.1h14.1v8.4h-14.1zM507.0 695.8h7.6v9.7h-7.6zM537.4 695.0h6.4v11.0h-6.4zM545.1 695.1h5.2v9.6h-5.2zM552.3 695.5h8.1v10.4h-8.1zM552.3 705.9h3.0v2.9h-3.0zM561.2 695.8h10.9v10.1h-10.9zM573.5 695.6h10.9v9.6h-10.9zM584.8 695.4h13.1v10.0h-13.1zM584.8 705.5h5.6v2.6h-5.6zM599.4 695.7h12.8v10.6h-12.8zM612.9 695.3h6.0v10.2h-6.0zM612.9 705.5h2.5v2.4h-2.5zM637.8 695.3h7.8v10.5h-7.8zM646.8 695.8h3.3v9.9h-3.3zM652.2 695.4h7.1v10.0h-7.1zM652.2 705.4h3.2v2.9h-3.2zM660.4 695.5h9.2v9.8h-9.2zM670.2 695.2h12.1v10.9h-12.1zM684.3 695.3h5.8v9.9h-5.8zM692.5 695.3h6.4v10.6h-6.4zM692.5 705.9h3.1v2.4h-3.1zM700.1 695.4h6.9v9.9h-6.9zM719.5 695.1h5.9v10.0h-5.9zM719.5 705.1h3.4v1.7h-3.4zM736.4 695.0h13.1v9.8h-13.1zM750.1 695.8h5.2v10.4h-5.2zM756.0 695.4h5.4v10.8h-5.4zM763.1 695.2h15.1v9.9h-15.1zM779.4 695.6h4.1v10.5h-4.1zM784.1 695.2h4.4v11.2h-4.4zM789.8 695.5h4.5v11.0h-4.5zM796.2 695.7h10.4v11.0h-10.4zM808.0 695.7h7.0v10.1h-7.0zM817.3 695.5h6.5v11.0h-6.5zM817.3 706.5h3.1v1.5h-3.1zM837.2 695.1h3.0v10.1h-3.0zM842.5 695.0h7.5v10.0h-7.5zM850.9 695.2h3.9v9.7h-3.9zM856.4 695.5h6.2v9.5h-6.2zM856.4 705.0h4.6v2.6h-4.6zM864.0 695.6h4.5v10.5h-4.5zM864.0 706.2h2.8v2.5h-2.8zM870.5 695.1h8.8v10.4h-8.8zM892.5 695.4h5.1v10.6h-5.1zM892.5 706.0h3.8v2.7h-3.8zM898.4 695.2h13.0v9.8h-13.0zM912.4 695.1h8.2v9.7h-8.2zM526.3 707.4h8.7v10.0h-8.7zM535.9 707.6h14.3v9.6h-14.3zM535.9 717.1h11.9v1.4h-11.9zM552.0 707.6h7.8v10.0h-7.8zM561.5 707.1h15.1v9.6h-15.1zM561.5 716.7h11.1v1.2h-11.1zM577.5 707.3h10.9v9.1h-10.9zM589.2 707.3h3.9v9.2h-3.9zM594.0 707.2h9.0v9.5h-9.0zM604.5 707.6h6.6v9.9h-6.6zM618.2 707.3h12.6v9.5h-12.6zM618.2 716.8h8.7v2.3h-8.7zM632.1 707.7h13.8v9.4h-13.8zM647.9 707.3h10.4v9.0h-10.4zM647.9 716.3h5.0v1.3h-5.0zM660.5 707.7h8.5v8.6h-8.5zM669.8 707.6h5.8v9.3h-5.8zM686.4 707.4h12.0v9.8h-12.0zM700.3 707.8h6.2v10.0h-6.2zM708.6 707.5h6.4v8.7h-6.4zM716.4 707.6h4.8v10.0h-4.8zM722.3 707.4h8.3v9.8h-8.3zM732.2 707.8h8.8v9.4h-8.8zM742.0 707.1h6.1v10.1h-6.1zM742.0 717.2h3.5v1.6h-3.5zM749.9 707.2h15.1v9.0h-15.1zM749.9 716.1h3.8v2.1h-3.8zM766.1 707.1h8.0v9.6h-8.0zM766.1 716.7h3.6v2.7h-3.6zM775.0 707.1h10.8v9.4h-10.8zM775.0 716.6h8.4v1.9h-8.4zM787.5 707.6h9.0v9.0h-9.0zM787.5 716.6h3.8v1.7h-3.8zM797.1 707.2h7.3v10.0h-7.3zM806.3 707.3h3.2v9.5h-3.2zM811.4 707.5h6.2v9.6h-6.2zM819.4 707.5h10.0v9.2h-10.0zM831.3 707.2h8.6v9.1h-8.6zM840.8 707.2h12.9v9.4h-12.9zM855.3 707.2h5.6v9.0h-5.6zM862.1 707.1h5.9v9.7h-5.9zM868.9 707.6h7.0v9.0h-7.0zM868.9 716.6h2.4v1.5h-2.4zM877.5 707.6h14.3v9.4h-14.3zM893.4 707.2h14.3v8.5h-14.3zM893.4 715.7h10.8v2.6h-10.8zM918.2 707.8h3.3v9.7h-3.3zM918.2 717.5h2.1v2.3h-2.1zM506.1 718.3h6.1v7.6h-6.1zM513.2 718.4h2.9v7.9h-2.9zM517.9 718.2h5.8v8.0h-5.8zM517.9 726.2h2.6v2.0h-2.6zM525.1 718.5h5.0v8.6h-5.0zM525.1 727.1h3.3v1.9h-3.3zM531.9 718.1h12.2v9.1h-12.2zM531.9 727.2h6.9v1.3h-6.9zM546.0 718.5h5.0v8.6h-5.0zM557.7 718.4h8.9v7.9h-8.9zM568.4 718.6h5.9v9.0h-5.9zM576.2 718.5h5.0v8.9h-5.0zM582.5 718.3h4.1v9.1h-4.1zM588.4 718.2h12.7v7.8h-12.7zM588.4 726.0h4.0v1.7h-4.0zM602.3 718.4h10.2v9.1h-10.2zM614.1 718.5h4.2v7.6h-4.2zM639.9 718.7h7.8v8.4h-7.8zM639.9 727.1h2.1v2.3h-2.1zM648.7 718.3h7.6v7.6h-7.6zM648.7 725.9h6.6v1.2h-6.6zM657.9 718.6h4.0v7.9h-4.0zM662.8 718.1h4.9v8.7h-4.9zM670.1 718.8h8.0v8.3h-8.0zM670.1 727.1h2.1v1.7h-2.1zM679.8 718.4h9.1v8.9h-9.1zM689.9 718.4h6.8v8.0h-6.8zM698.4 718.8h12.7v7.8h-12.7zM698.4 726.6h4.0v1.2h-4.0zM712.2 718.7h8.1v8.3h-8.1zM722.2 718.1h7.5v7.9h-7.5zM731.1 718.1h10.9v8.3h-10.9zM752.1 718.1h4.7v9.0h-4.7zM752.1 727.1h2.1v2.1h-2.1zM792.4 718.4h6.0v7.7h-6.0zM792.4 726.1h2.6v2.6h-2.6zM800.3 718.4h8.4v7.5h-8.4zM800.3 725.9h2.3v2.5h-2.3zM810.3 718.7h4.6v8.2h-4.6zM815.9 718.7h5.4v8.5h-5.4zM823.4 718.1h4.6v8.8h-4.6zM829.3 718.1h5.5v7.6h-5.5zM836.2 718.3h3.6v8.1h-3.6zM836.2 726.4h2.1v2.1h-2.1zM847.9 718.5h13.9v8.3h-13.9zM864.2 718.5h5.2v8.8h-5.2zM871.0 718.7h7.0v7.8h-7.0zM879.5 718.2h4.9v8.5h-4.9zM886.4 718.1h14.9v7.5h-14.9zM902.2 718.8h12.4v9.0h-12.4zM915.8 718.2h7.2v8.5h-7.2zM915.8 726.7h5.5v2.1h-5.5zM518.2 728.5h8.2v9.1h-8.2zM527.7 728.5h3.4v7.7h-3.4zM532.9 728.0h5.8v7.9h-5.8zM550.0 728.6h4.1v7.9h-4.1zM556.4 728.0h8.8v9.1h-8.8zM565.8 728.5h8.3v8.6h-8.3zM575.7 728.1h14.9v7.7h-14.9zM575.7 735.9h8.1v2.0h-8.1zM620.1 728.7h12.7v9.1h-12.7zM620.1 737.7h2.6v1.4h-2.6zM633.7 728.5h7.0v8.0h-7.0zM642.7 728.4h10.4v8.7h-10.4zM655.0 728.3h5.7v8.3h-5.7zM662.2 728.1h4.4v8.4h-4.4zM667.8 728.1h14.4v9.0h-14.4zM694.2 728.6h4.1v8.0h-4.1zM698.7 728.3h8.2v8.7h-8.2zM708.8 728.4h12.1v8.6h-12.1zM723.3 728.6h3.2v8.5h-3.2zM728.3 728.5h9.0v9.1h-9.0zM738.0 728.4h10.1v8.3h-10.1zM750.1 728.8h15.0v8.8h-15.0zM771.3 728.3h3.2v7.9h-3.2zM776.2 728.3h5.5v7.7h-5.5zM782.8 728.4h7.0v8.8h-7.0zM791.9 728.5h3.0v8.0h-3.0zM797.4 728.6h14.3v8.0h-14.3zM813.2 728.3h14.7v8.0h-14.7zM829.0 728.3h13.0v9.1h-13.0zM843.3 728.7h12.6v8.3h-12.6zM857.4 728.6h14.7v7.5h-14.7zM873.0 728.7h4.5v8.0h-4.5zM886.8 728.0h6.7v8.5h-6.7zM895.0 728.5h14.2v7.9h-14.2zM895.0 736.4h7.1v2.7h-7.1zM910.7 728.7h10.5v8.2h-10.5zM524.0 738.0h6.2v10.5h-6.2zM532.6 738.3h8.1v10.6h-8.1zM542.6 738.7h7.1v12.2h-7.1zM561.3 738.8h14.7v10.5h-14.7zM577.4 738.1h3.5v11.0h-3.5zM602.9 738.0h4.2v11.7h-4.2zM602.9 749.7h2.6v2.1h-2.6zM608.5 738.3h11.9v12.1h-11.9zM608.5 750.4h2.7v3.0h-2.7zM622.5 738.6h12.9v11.9h-12.9zM646.3 738.7h12.0v11.5h-12.0zM646.3 750.2h9.7v1.0h-9.7zM676.0 738.3h2.9v11.5h-2.9zM681.3 738.1h10.2v10.8h-10.2zM693.6 738.3h4.8v12.2h-4.8zM693.6 750.4h2.5v1.5h-2.5zM714.7 738.3h6.9v11.5h-6.9zM736.3 738.4h11.0v11.6h-11.0zM748.5 738.5h3.9v12.0h-3.9zM754.7 738.3h5.3v11.5h-5.3zM754.7 749.8h3.9v2.0h-3.9zM761.6 738.1h13.1v11.2h-13.1zM775.2 738.8h6.2v10.5h-6.2zM782.9 738.2h5.7v10.5h-5.7zM789.9 738.1h11.9v11.1h-11.9zM789.9 749.1h5.8v1.1h-5.8zM820.7 738.3h5.0v11.5h-5.0zM843.2 738.7h7.2v11.8h-7.2zM851.7 738.0h4.2v11.0h-4.2zM872.4 738.5h12.0v12.2h-12.0zM886.3 738.5h3.0v11.0h-3.0zM890.9 738.6h14.8v10.7h-14.8zM890.9 749.3h7.2v2.6h-7.2zM907.5 738.6h15.0v11.0h-15.0zM507.0 751.2h10.0v5.8h-10.0zM519.0 751.6h4.3v6.0h-4.3zM531.9 751.3h3.1v6.8h-3.1zM537.3 751.2h3.3v6.3h-3.3zM542.2 751.6h3.7v6.5h-3.7zM546.8 751.7h7.7v6.5h-7.7zM555.7 751.6h4.8v7.0h-4.8zM562.1 751.2h3.2v5.8h-3.2zM566.9 751.4h10.7v6.1h-10.7zM578.9 751.4h12.5v7.1h-12.5zM593.2 751.1h15.2v5.5h-15.2zM593.2 756.6h4.7v2.3h-4.7zM615.9 751.2h6.2v6.8h-6.2zM615.9 757.9h2.8v1.5h-2.8zM622.7 751.4h8.8v6.6h-8.8zM633.0 751.5h12.3v7.1h-12.3zM667.1 751.5h13.0v6.7h-13.0zM681.1 751.7h10.3v6.9h-10.3zM693.3 751.7h4.7v6.9h-4.7zM698.7 751.3h10.9v6.5h-10.9zM710.7 751.2h10.1v6.9h-10.1zM722.8 751.4h5.0v5.9h-5.0zM722.8 757.3h2.5v1.3h-2.5zM730.1 751.8h4.2v6.7h-4.2zM730.1 758.4h3.1v1.0h-3.1zM735.7 751.3h3.9v5.9h-3.9zM741.9 751.3h10.7v5.6h-10.7zM754.1 751.8h5.4v6.0h-5.4zM760.8 751.6h6.4v6.5h-6.4zM760.8 758.1h4.4v2.0h-4.4zM769.4 751.3h10.8v6.7h-10.8zM781.0 751.5h13.1v6.4h-13.1zM781.0 757.9h10.5v1.6h-10.5zM795.0 751.3h13.1v6.9h-13.1zM809.1 751.1h14.3v6.4h-14.3zM825.0 751.6h5.8v5.9h-5.8zM825.0 757.6h2.4v1.4h-2.4zM832.1 751.5h8.7v7.0h-8.7zM841.9 751.0h3.4v5.8h-3.4zM869.3 751.3h7.3v6.7h-7.3zM878.4 751.1h6.8v6.4h-6.8zM878.4 757.5h5.0v1.2h-5.0zM885.7 751.6h10.2v6.8h-10.2zM885.7 758.4h5.6v1.4h-5.6zM903.7 751.7h12.0v5.6h-12.0zM918.0 751.4h6.0v6.9h-6.0zM918.0 758.3h2.8v2.8h-2.8z" fill="#d9d0c9" stroke="#c9bdb3" stroke-width="0.6"/>
<path d="M616 475 L712 475 L706 540 L712 600 L620 606Z" fill="#f2efe9"/>
<path d="M513 475 L620 475 L622 632 L513 610Z" fill="#b6d6a6"/>
<path d="M513 475 L570 475 Q560 500 548 505 Q530 520 513 520Z" fill="#aacf9b"/>
<path d="M585 475 L606 475 L616 604 L596 604 Q604 560 592 530 Q582 500 585 475Z" fill="#a6cd97"/>
<path d="M540 560 Q575 545 598 575 L600 604 L560 604 Q545 590 540 560Z" fill="#c6e4b4"/>
<circle cx="570" cy="530" r="13.5" fill="#c8e6b6"/>
<path d="M513 530 Q530 545 540 575 L513 580Z" fill="#bcdcab"/>
<path d="M519 585 L545 578 L565 590 L562 602 L520 602Z" fill="#8fd8b6"/>
<path d="M564 594 L578 592 L580 606 L566 607Z" fill="#d9d0c9"/>
<path d="M614 475 L621 475 L623 606 L617 606Z" fill="#f4f2c4"/>
<path d="M661 492 L705 490 L703 552 L663 555Z" fill="#cdebb0"/>
<path d="M619 505 L657 503 L657 520 L619 520Z" fill="#cdebb0"/>
<path d="M663 557 L703 553 L708 600 L665 604Z" fill="#cdebb0"/>
<path d="M619 483 L654 483 L654 502 L619 502Z M616 517 L640 517 L640 533 L626 533 L626 551 L616 551Z M620 567 L640 565 L641 601 L621 602Z M643 561 L661 560 L661 583 L643 584Z M661 504 L674 504 L674 514 L661 514Z M677 502 L683 502 L683 538 L677 538Z M671 561 L700 556 L711 596 L676 600Z M690 488 L706 488 L704 500 L690 500Z" fill="#d9d0c9" stroke="#c9bdb3" stroke-width="0.7"/>
<path d="M627 520 L650 520 L650 548 L627 548Z" fill="#fbf8cf"/>
<path d="M630 576 L642 576 L642 596 L630 596Z" fill="#dedede"/>
<path d="M513 612 L740 657 L513 707Z" fill="#cdebb0"/>
<path d="M727 498 L740 498 L740 535 L727 535Z" fill="#f4f2c4"/>
<path d="M741 512 Q752 505 764 515 L764 535 L741 535Z" fill="#d6cdc6" stroke="#c9bdb3" stroke-width="0.7"/>
<path d="M730 567 L750 567 L750 586 L730 586Z" fill="#c8f0c8"/>
<path d="M846 542 L872 540 L872 590 L846 591Z" fill="#d5d5d5"/>
<path d="M826 547 L848 545 L848 564 L828 565Z" fill="#faf7c9" stroke="#e4dc96" stroke-width="0.9"/>
<path d="M810 577 L839 577 L839 591 L810 591Z" fill="#cdebb0"/>
<path d="M908 536 L918 532 L918 598 L906 600Z" fill="#cdebb0"/>
<path d="M751 623 L795 618 L797 644 L751 646Z" fill="#c8f0c8"/>
<path d="M761 629 L777 627 L778 639 L762 640Z" fill="#8fd8b6"/>
<path d="M861 670 L901 660 L903 702 L866 706Z" fill="#cdebb0"/>
<path d="M875 672 L888 670 L889 688 L876 689Z" fill="#c2b2a5"/>
<path d="M782 690 L824 682 L826 740 L786 744Z" fill="#dcdcdc"/>
<path d="M700 672 L740 664 L748 704 L704 708Z" fill="#d9d0c9" stroke="#c9bdb3" stroke-width="0.7"/>
<path d="M895 641 L906 639.5 L907.5 648.5 L896 650Z" fill="#8fd8b6"/>
<path d="M877 627 L892 626 L893 640 L878 641Z" fill="#f5f2c6"/>
<path d="M826 641 L880 637 L881 660 L834 667Z" fill="#dadada"/>
<path d="M846 644 L852 643 L853 650 L847 651Z M834 655 L840 654 L841 660 L835 661Z" fill="#d9d0c9" stroke="#c9bdb3" stroke-width="0.7"/>
<path d="M664 679 L689 676 L692 712 L668 714Z" fill="#d9d9e6"/>
<path d="M696 628 L733 630 L740 658 L702 662Z" fill="#d7d7e8"/>
<path d="M611 693 L663 680 L673 713 L620 730Z" fill="#d9d0c9" stroke="#c4b8ae" stroke-width="1"/>
<path d="M620 697 L658 688 L662 713 L624.5 720Z" fill="#88dfbb"/>
<path d="M658 713 L686 712 L690 736 L666 740Z" fill="#cdebb0"/>
<path d="M513 712 L580 700 L583 735 L513 740Z" fill="#dcdcdc" fill-opacity="0.6"/>
<path d="M640 478 L713 491" fill="none" stroke="#d3ccc4" stroke-width="8.0" stroke-linecap="round" stroke-linejoin="round"/><path d="M640 478 L713 491" fill="none" stroke="#ffffff" stroke-width="7" stroke-linecap="round" stroke-linejoin="round"/>
<path d="M730 492.5 L786 492 L845 493" fill="none" stroke="#d3ccc4" stroke-width="6.0" stroke-linecap="round" stroke-linejoin="round"/><path d="M730 492.5 L786 492 L845 493" fill="none" stroke="#ffffff" stroke-width="5" stroke-linecap="round" stroke-linejoin="round"/>
<path d="M787 492 L787 520" fill="none" stroke="#d3ccc4" stroke-width="5.0" stroke-linecap="round" stroke-linejoin="round"/><path d="M787 492 L787 520" fill="none" stroke="#ffffff" stroke-width="4" stroke-linecap="round" stroke-linejoin="round"/>
<path d="M810 476 L811 510" fill="none" stroke="#d3ccc4" stroke-width="5.5" stroke-linecap="round" stroke-linejoin="round"/><path d="M810 476 L811 510" fill="none" stroke="#ffffff" stroke-width="4.5" stroke-linecap="round" stroke-linejoin="round"/>
<path d="M844 476 L845 503" fill="none" stroke="#d3ccc4" stroke-width="5.0" stroke-linecap="round" stroke-linejoin="round"/><path d="M844 476 L845 503" fill="none" stroke="#ffffff" stroke-width="4" stroke-linecap="round" stroke-linejoin="round"/>
<path d="M722 548 L808 511 L845 504 L918 502.5" fill="none" stroke="#d3ccc4" stroke-width="6.5" stroke-linecap="round" stroke-linejoin="round"/><path d="M722 548 L808 511 L845 504 L918 502.5" fill="none" stroke="#ffffff" stroke-width="5.5" stroke-linecap="round" stroke-linejoin="round"/>
<path d="M810 510 L809 570 L807 617" fill="none" stroke="#d3ccc4" stroke-width="5.5" stroke-linecap="round" stroke-linejoin="round"/><path d="M810 510 L809 570 L807 617" fill="none" stroke="#ffffff" stroke-width="4.5" stroke-linecap="round" stroke-linejoin="round"/>
<path d="M871 502 L872 593" fill="none" stroke="#d3ccc4" stroke-width="5.5" stroke-linecap="round" stroke-linejoin="round"/><path d="M871 502 L872 593" fill="none" stroke="#ffffff" stroke-width="4.5" stroke-linecap="round" stroke-linejoin="round"/>
<path d="M812 545 L869 537.5 L918 534.5" fill="none" stroke="#d3ccc4" stroke-width="6.0" stroke-linecap="round" stroke-linejoin="round"/><path d="M812 545 L869 537.5 L918 534.5" fill="none" stroke="#ffffff" stroke-width="5" stroke-linecap="round" stroke-linejoin="round"/>
<path d="M616 560 L704 551.5" fill="none" stroke="#d3ccc4" stroke-width="6.0" stroke-linecap="round" stroke-linejoin="round"/><path d="M616 560 L704 551.5" fill="none" stroke="#ffffff" stroke-width="5" stroke-linecap="round" stroke-linejoin="round"/>
<path d="M660 502 L661 560 L665 600 L653 630" fill="none" stroke="#d3ccc4" stroke-width="6.0" stroke-linecap="round" stroke-linejoin="round"/><path d="M660 502 L661 560 L665 600 L653 630" fill="none" stroke="#ffffff" stroke-width="5" stroke-linecap="round" stroke-linejoin="round"/>
<path d="M660 600.5 L697 601" fill="none" stroke="#d3ccc4" stroke-width="5.0" stroke-linecap="round" stroke-linejoin="round"/><path d="M660 600.5 L697 601" fill="none" stroke="#ffffff" stroke-width="4" stroke-linecap="round" stroke-linejoin="round"/>
<path d="M754 539 L761 564 L772 601 L783 610 L828 679 L833 753" fill="none" stroke="#d3ccc4" stroke-width="5.5" stroke-linecap="round" stroke-linejoin="round"/><path d="M754 539 L761 564 L772 601 L783 610 L828 679 L833 753" fill="none" stroke="#ffffff" stroke-width="4.5" stroke-linecap="round" stroke-linejoin="round"/>
<path d="M764 562.6 L808 558" fill="none" stroke="#d3ccc4" stroke-width="5.0" stroke-linecap="round" stroke-linejoin="round"/><path d="M764 562.6 L808 558" fill="none" stroke="#ffffff" stroke-width="4" stroke-linecap="round" stroke-linejoin="round"/>
<path d="M807 593 L917 589" fill="none" stroke="#d3ccc4" stroke-width="6.0" stroke-linecap="round" stroke-linejoin="round"/><path d="M807 593 L917 589" fill="none" stroke="#ffffff" stroke-width="5" stroke-linecap="round" stroke-linejoin="round"/>
<path d="M842 571 L842 593" fill="none" stroke="#d3ccc4" stroke-width="5.0" stroke-linecap="round" stroke-linejoin="round"/><path d="M842 571 L842 593" fill="none" stroke="#ffffff" stroke-width="4" stroke-linecap="round" stroke-linejoin="round"/>
<path d="M866 593 L868 621" fill="none" stroke="#d3ccc4" stroke-width="5.0" stroke-linecap="round" stroke-linejoin="round"/><path d="M866 593 L868 621" fill="none" stroke="#ffffff" stroke-width="4" stroke-linecap="round" stroke-linejoin="round"/>
<path d="M775 695 L828 680 L918 654" fill="none" stroke="#d3ccc4" stroke-width="6.0" stroke-linecap="round" stroke-linejoin="round"/><path d="M775 695 L828 680 L918 654" fill="none" stroke="#ffffff" stroke-width="5" stroke-linecap="round" stroke-linejoin="round"/>
<path d="M713 724.5 L775 695" fill="none" stroke="#d3ccc4" stroke-width="5.0" stroke-linecap="round" stroke-linejoin="round"/><path d="M713 724.5 L775 695" fill="none" stroke="#ffffff" stroke-width="4" stroke-linecap="round" stroke-linejoin="round"/>
<path d="M738 710 L761 753" fill="none" stroke="#d3ccc4" stroke-width="5.0" stroke-linecap="round" stroke-linejoin="round"/><path d="M738 710 L761 753" fill="none" stroke="#ffffff" stroke-width="4" stroke-linecap="round" stroke-linejoin="round"/>
<path d="M852 670 L855 753" fill="none" stroke="#d3ccc4" stroke-width="5.0" stroke-linecap="round" stroke-linejoin="round"/><path d="M852 670 L855 753" fill="none" stroke="#ffffff" stroke-width="4" stroke-linecap="round" stroke-linejoin="round"/>
<path d="M513 739 L591 730" fill="none" stroke="#d3ccc4" stroke-width="5.5" stroke-linecap="round" stroke-linejoin="round"/><path d="M513 739 L591 730" fill="none" stroke="#ffffff" stroke-width="4.5" stroke-linecap="round" stroke-linejoin="round"/>
<path d="M541 711 L541 753" fill="none" stroke="#d3ccc4" stroke-width="5.0" stroke-linecap="round" stroke-linejoin="round"/><path d="M541 711 L541 753" fill="none" stroke="#ffffff" stroke-width="4" stroke-linecap="round" stroke-linejoin="round"/>
<path d="M582 706 L585 753" fill="none" stroke="#d3ccc4" stroke-width="5.0" stroke-linecap="round" stroke-linejoin="round"/><path d="M582 706 L585 753" fill="none" stroke="#ffffff" stroke-width="4" stroke-linecap="round" stroke-linejoin="round"/>
<path d="M689 673 L694 753" fill="none" stroke="#d3ccc4" stroke-width="5.0" stroke-linecap="round" stroke-linejoin="round"/><path d="M689 673 L694 753" fill="none" stroke="#ffffff" stroke-width="4" stroke-linecap="round" stroke-linejoin="round"/>
<path d="M722 590 L760 580" fill="none" stroke="#d3ccc4" stroke-width="4.5" stroke-linecap="round" stroke-linejoin="round"/><path d="M722 590 L760 580" fill="none" stroke="#ffffff" stroke-width="3.5" stroke-linecap="round" stroke-linejoin="round"/>
<path d="M513 707 L717 667 L745 660" fill="none" stroke="#d3ccc4" stroke-width="10.0" stroke-linecap="round" stroke-linejoin="round"/><path d="M513 707 L717 667 L745 660" fill="none" stroke="#ffffff" stroke-width="9" stroke-linecap="round" stroke-linejoin="round"/>
<path d="M510 610 L745 656" fill="none" stroke="#d3ccc4" stroke-width="14.0" stroke-linecap="round" stroke-linejoin="round"/><path d="M510 610 L745 656" fill="none" stroke="#ffffff" stroke-width="13" stroke-linecap="round" stroke-linejoin="round"/>
<path d="M745 654 L920 613" fill="none" stroke="#d3ccc4" stroke-width="10.0" stroke-linecap="round" stroke-linejoin="round"/><path d="M745 654 L920 613" fill="none" stroke="#ffffff" stroke-width="9" stroke-linecap="round" stroke-linejoin="round"/>
<path d="M510 610 L745 655 L920 613" fill="none" stroke="#7a7a7a" stroke-width="2.2" stroke-dasharray="2 3.6"/>
<path d="M513 702 L717 659" fill="none" stroke="#6767ef" stroke-width="1.6" stroke-dasharray="2 2"/>
<path d="M657.5 482 L657.5 502.4 L674.4 502.4 L689 490.7 L709.7 493.6" fill="none" stroke="#6767ef" stroke-width="1.4" stroke-dasharray="2 2"/>
<rect x="571.6" y="617.6" width="5.8" height="5.8" fill="#7078bd"/>
<rect x="584.4" y="619.9" width="5.8" height="5.8" fill="#7078bd"/>
<rect x="639.6" y="632.3000000000001" width="5.8" height="5.8" fill="#7078bd"/>
<rect x="650.4" y="634.5" width="5.8" height="5.8" fill="#7078bd"/>
<rect x="727.6" y="651.4" width="5.8" height="5.8" fill="#7078bd"/>
<rect x="759.8000000000001" y="644.5" width="5.8" height="5.8" fill="#7078bd"/>
<rect x="875.5" y="618.5" width="5.8" height="5.8" fill="#7078bd"/>
<rect x="900.3000000000001" y="613.5" width="5.8" height="5.8" fill="#7078bd"/>
<path d="M919 688 L880 714.6 Q866 726 858.6 742.6 L852 754" fill="none" stroke="#ffffff" stroke-width="6.5"/>
<path d="M919 688 L880 714.6 Q866 726 858.6 742.6 L852 754" fill="none" stroke="#707070" stroke-width="2.4"/>
<path d="M916 522 Q902 560 908 612" fill="none" stroke="#9c9c9c" stroke-width="2.2" stroke-dasharray="2 2"/>
<path d="M513 515 Q545 500 590 480" fill="none" stroke="#f5f5ee" stroke-width="2.6" stroke-opacity="0.55"/>
<path d="M513 515 Q545 500 590 480" fill="none" stroke="#ef8a7f" stroke-width="1.4" stroke-dasharray="1.7 2.1"/>
<path d="M528 475 Q560 505 580 560 Q592 590 600 604" fill="none" stroke="#f5f5ee" stroke-width="2.6" stroke-opacity="0.55"/>
<path d="M528 475 Q560 505 580 560 Q592 590 600 604" fill="none" stroke="#ef8a7f" stroke-width="1.4" stroke-dasharray="1.7 2.1"/>
<path d="M513 556 Q560 556 612 536" fill="none" stroke="#f5f5ee" stroke-width="2.6" stroke-opacity="0.55"/>
<path d="M513 556 Q560 556 612 536" fill="none" stroke="#ef8a7f" stroke-width="1.4" stroke-dasharray="1.7 2.1"/>
<path d="M545 604 Q560 540 602 500" fill="none" stroke="#f5f5ee" stroke-width="2.6" stroke-opacity="0.55"/>
<path d="M545 604 Q560 540 602 500" fill="none" stroke="#ef8a7f" stroke-width="1.4" stroke-dasharray="1.7 2.1"/>
<path d="M563 475 Q585 512 614 525" fill="none" stroke="#f5f5ee" stroke-width="2.6" stroke-opacity="0.55"/>
<path d="M563 475 Q585 512 614 525" fill="none" stroke="#ef8a7f" stroke-width="1.4" stroke-dasharray="1.7 2.1"/>
<path d="M513 588 Q560 588 612 582" fill="none" stroke="#f5f5ee" stroke-width="2.6" stroke-opacity="0.55"/>
<path d="M513 588 Q560 588 612 582" fill="none" stroke="#ef8a7f" stroke-width="1.4" stroke-dasharray="1.7 2.1"/>
<path d="M598 480 Q610 530 600 604" fill="none" stroke="#f5f5ee" stroke-width="2.6" stroke-opacity="0.55"/>
<path d="M598 480 Q610 530 600 604" fill="none" stroke="#ef8a7f" stroke-width="1.4" stroke-dasharray="1.7 2.1"/>
<path d="M513 640 L740 660" fill="none" stroke="#f5f5ee" stroke-width="2.6" stroke-opacity="0.55"/>
<path d="M513 640 L740 660" fill="none" stroke="#ef8a7f" stroke-width="1.4" stroke-dasharray="1.7 2.1"/>
<path d="M513 676 L700 646" fill="none" stroke="#f5f5ee" stroke-width="2.6" stroke-opacity="0.55"/>
<path d="M513 676 L700 646" fill="none" stroke="#ef8a7f" stroke-width="1.4" stroke-dasharray="1.7 2.1"/>
<path d="M560 623 L598 700" fill="none" stroke="#f5f5ee" stroke-width="2.6" stroke-opacity="0.55"/>
<path d="M560 623 L598 700" fill="none" stroke="#ef8a7f" stroke-width="1.4" stroke-dasharray="1.7 2.1"/>
<path d="M596 628 L576 705" fill="none" stroke="#f5f5ee" stroke-width="2.6" stroke-opacity="0.55"/>
<path d="M596 628 L576 705" fill="none" stroke="#ef8a7f" stroke-width="1.4" stroke-dasharray="1.7 2.1"/>
<path d="M513 662 L606 688" fill="none" stroke="#f5f5ee" stroke-width="2.6" stroke-opacity="0.55"/>
<path d="M513 662 L606 688" fill="none" stroke="#ef8a7f" stroke-width="1.4" stroke-dasharray="1.7 2.1"/>
<path d="M530 620 L520 700" fill="none" stroke="#f5f5ee" stroke-width="2.6" stroke-opacity="0.55"/>
<path d="M530 620 L520 700" fill="none" stroke="#ef8a7f" stroke-width="1.4" stroke-dasharray="1.7 2.1"/>
<path d="M665 490 L702 535" fill="none" stroke="#f5f5ee" stroke-width="2.6" stroke-opacity="0.55"/>
<path d="M665 490 L702 535" fill="none" stroke="#ef8a7f" stroke-width="1.4" stroke-dasharray="1.7 2.1"/>
<path d="M690 495 L664 545" fill="none" stroke="#f5f5ee" stroke-width="2.6" stroke-opacity="0.55"/>
<path d="M690 495 L664 545" fill="none" stroke="#ef8a7f" stroke-width="1.4" stroke-dasharray="1.7 2.1"/>
<path d="M625 568 L700 565" fill="none" stroke="#f5f5ee" stroke-width="2.6" stroke-opacity="0.55"/>
<path d="M625 568 L700 565" fill="none" stroke="#ef8a7f" stroke-width="1.4" stroke-dasharray="1.7 2.1"/>
<path d="M618 508 L656 508" fill="none" stroke="#f5f5ee" stroke-width="2.6" stroke-opacity="0.55"/>
<path d="M618 508 L656 508" fill="none" stroke="#ef8a7f" stroke-width="1.4" stroke-dasharray="1.7 2.1"/>
<path d="M685 510 L685 550" fill="none" stroke="#f5f5ee" stroke-width="2.6" stroke-opacity="0.55"/>
<path d="M685 510 L685 550" fill="none" stroke="#ef8a7f" stroke-width="1.4" stroke-dasharray="1.7 2.1"/>
<path d="M790 525 L805 560" fill="none" stroke="#f5f5ee" stroke-width="2.6" stroke-opacity="0.55"/>
<path d="M790 525 L805 560" fill="none" stroke="#ef8a7f" stroke-width="1.4" stroke-dasharray="1.7 2.1"/>
<path d="M820 518 L862 528" fill="none" stroke="#f5f5ee" stroke-width="2.6" stroke-opacity="0.55"/>
<path d="M820 518 L862 528" fill="none" stroke="#ef8a7f" stroke-width="1.4" stroke-dasharray="1.7 2.1"/>
<path d="M880 560 L905 600" fill="none" stroke="#f5f5ee" stroke-width="2.6" stroke-opacity="0.55"/>
<path d="M880 560 L905 600" fill="none" stroke="#ef8a7f" stroke-width="1.4" stroke-dasharray="1.7 2.1"/>
<path d="M830 600 L860 622" fill="none" stroke="#f5f5ee" stroke-width="2.6" stroke-opacity="0.55"/>
<path d="M830 600 L860 622" fill="none" stroke="#ef8a7f" stroke-width="1.4" stroke-dasharray="1.7 2.1"/>
<path d="M892 640 L898 700" fill="none" stroke="#f5f5ee" stroke-width="2.6" stroke-opacity="0.55"/>
<path d="M892 640 L898 700" fill="none" stroke="#ef8a7f" stroke-width="1.4" stroke-dasharray="1.7 2.1"/>
<path d="M780 700 L800 742" fill="none" stroke="#f5f5ee" stroke-width="2.6" stroke-opacity="0.55"/>
<path d="M780 700 L800 742" fill="none" stroke="#ef8a7f" stroke-width="1.4" stroke-dasharray="1.7 2.1"/>
<path d="M640 722 L655 753" fill="none" stroke="#f5f5ee" stroke-width="2.6" stroke-opacity="0.55"/>
<path d="M640 722 L655 753" fill="none" stroke="#ef8a7f" stroke-width="1.4" stroke-dasharray="1.7 2.1"/>
<path d="M740 500 L770 540" fill="none" stroke="#f5f5ee" stroke-width="2.6" stroke-opacity="0.55"/>
<path d="M740 500 L770 540" fill="none" stroke="#ef8a7f" stroke-width="1.4" stroke-dasharray="1.7 2.1"/>
<path d="M725 600 L745 620" fill="none" stroke="#f5f5ee" stroke-width="2.6" stroke-opacity="0.55"/>
<path d="M725 600 L745 620" fill="none" stroke="#ef8a7f" stroke-width="1.4" stroke-dasharray="1.7 2.1"/>
<path d="M850 700 L870 740" fill="none" stroke="#f5f5ee" stroke-width="2.6" stroke-opacity="0.55"/>
<path d="M850 700 L870 740" fill="none" stroke="#ef8a7f" stroke-width="1.4" stroke-dasharray="1.7 2.1"/>
<path d="M600 740 L660 730" fill="none" stroke="#f5f5ee" stroke-width="2.6" stroke-opacity="0.55"/>
<path d="M600 740 L660 730" fill="none" stroke="#ef8a7f" stroke-width="1.4" stroke-dasharray="1.7 2.1"/>
<path d="M700 680 L720 740" fill="none" stroke="#f5f5ee" stroke-width="2.6" stroke-opacity="0.55"/>
<path d="M700 680 L720 740" fill="none" stroke="#ef8a7f" stroke-width="1.4" stroke-dasharray="1.7 2.1"/>
<path d="M724 472 718.5 496 712.5 521 712 546 716 570 726.5 590 740.5 628 754.5 666 769 704 781 742 785 756" fill="none" stroke="#cfa561" stroke-width="21.5" stroke-linejoin="round"/>
<path d="M724 472 718.5 496 712.5 521 712 546 716 570 726.5 590 740.5 628 754.5 666 769 704 781 742 785 756" fill="none" stroke="#fcd6a4" stroke-width="19.5" stroke-linejoin="round"/>
<path d="M724 472 718.5 496 712.5 521 712 546 716 570 726.5 590 740.5 628 754.5 666 769 704 781 742 785 756" fill="none" stroke="#b08a3a" stroke-width="1.1" stroke-dasharray="40 3" transform="translate(-0.5 0)"/>
<path d="M724 472 718.5 496 712.5 521 712 546 716 570 726.5 590 740.5 628 754.5 666 769 704 781 742 785 756" fill="none" stroke="#a9a3c6" stroke-width="1.1" stroke-dasharray="1.2 3.5" transform="translate(6.5 0)"/>
<path d="M513 478.5 H918 M513 734.5 H918" stroke="#ffffff" stroke-opacity="0.75" stroke-width="1"/>
<text x="747" y="497" font-size="8" fill="#555" transform="rotate(-2 747 497)" text-anchor="start" font-family="Liberation Sans" stroke="#ffffff" stroke-width="1.8" stroke-opacity="0.85" paint-order="stroke">Czysta</text>
<text x="788" y="494.5" font-size="8" fill="#555" transform="rotate(-2 788 494.5)" text-anchor="start" font-family="Liberation Sans" stroke="#ffffff" stroke-width="1.8" stroke-opacity="0.85" paint-order="stroke">Czysta</text>
<text x="757" y="546" font-size="8" fill="#555" transform="rotate(-27 757 546)" text-anchor="start" font-family="Liberation Sans" stroke="#ffffff" stroke-width="1.8" stroke-opacity="0.85" paint-order="stroke">Krupnicza</text>
<text x="825" y="550" font-size="8" fill="#555" transform="rotate(-10 825 550)" text-anchor="start" font-family="Liberation Sans" stroke="#ffffff" stroke-width="1.8" stroke-opacity="0.85" paint-order="stroke">Studencka</text>
<text x="872" y="541" font-size="8" fill="#555" transform="rotate(-3 872 541)" text-anchor="start" font-family="Liberation Sans" stroke="#ffffff" stroke-width="1.8" stroke-opacity="0.85" paint-order="stroke">Studencka</text>
<text x="622.5" y="562" font-size="8.6" fill="#555" transform="rotate(-5 622.5 562)" text-anchor="start" font-family="Liberation Sans" stroke="#ffffff" stroke-width="1.8" stroke-opacity="0.85" paint-order="stroke">Romana Ingardena</text>
<text x="655" y="512" font-size="8" fill="#555" transform="rotate(80 655 512)" text-anchor="start" font-family="Liberation Sans" stroke="#ffffff" stroke-width="1.8" stroke-opacity="0.85" paint-order="stroke">Oleandry</text>
<text x="659" y="561" font-size="8" fill="#555" transform="rotate(82 659 561)" text-anchor="start" font-family="Liberation Sans" stroke="#ffffff" stroke-width="1.8" stroke-opacity="0.85" paint-order="stroke">Oleandry</text>
<text x="763" y="567" font-size="8" fill="#555" transform="rotate(72 763 567)" text-anchor="start" font-family="Liberation Sans" stroke="#ffffff" stroke-width="1.8" stroke-opacity="0.85" paint-order="stroke">Wenecja</text>
<text x="667" y="645" font-size="9" fill="#555" transform="rotate(11 667 645)" text-anchor="start" font-family="Liberation Sans" stroke="#ffffff" stroke-width="1.8" stroke-opacity="0.85" paint-order="stroke">Aleja 3 Maja</text>
<text x="510" y="612" font-size="8" fill="#555" transform="rotate(15 510 612)" text-anchor="start" font-family="Liberation Sans" stroke="#ffffff" stroke-width="1.8" stroke-opacity="0.85" paint-order="stroke">Maja</text>
<text x="782" y="700" font-size="8" fill="#555" transform="rotate(-17 782 700)" text-anchor="start" font-family="Liberation Sans" stroke="#ffffff" stroke-width="1.8" stroke-opacity="0.85" paint-order="stroke">Smoleńsk</text>
<text x="871" y="664" font-size="8" fill="#555" transform="rotate(-17 871 664)" text-anchor="start" font-family="Liberation Sans" stroke="#ffffff" stroke-width="1.8" stroke-opacity="0.85" paint-order="stroke">Smoleńsk</text>
<text x="828" y="690" font-size="8" fill="#555" transform="rotate(84 828 690)" text-anchor="start" font-family="Liberation Sans" stroke="#ffffff" stroke-width="1.8" stroke-opacity="0.85" paint-order="stroke">Retoryka</text>
<text x="848" y="722" font-size="8" fill="#555" transform="rotate(84 848 722)" text-anchor="start" font-family="Liberation Sans" stroke="#ffffff" stroke-width="1.8" stroke-opacity="0.85" paint-order="stroke">Retoryka</text>
<text x="889" y="721.5" font-size="11.5" fill="#8d8d8d" text-anchor="start" font-family="Liberation Sans">Nowy</text>
<text x="513" y="513" font-size="11" fill="#3e9b4d" font-style="italic" text-anchor="start" font-family="Liberation Sans" stroke="#ffffff" stroke-width="1.8" stroke-opacity="0.85" paint-order="stroke">ark Dr.</text>
<text x="520" y="528" font-size="11" fill="#3e9b4d" font-style="italic" text-anchor="start" font-family="Liberation Sans" stroke="#ffffff" stroke-width="1.8" stroke-opacity="0.85" paint-order="stroke">D</text>
<text x="517" y="542" font-size="11" fill="#3e9b4d" font-style="italic" text-anchor="start" font-family="Liberation Sans" stroke="#ffffff" stroke-width="1.8" stroke-opacity="0.85" paint-order="stroke">H</text>
<text x="517" y="557.5" font-size="11.5" fill="#3e9b4d" font-style="italic" text-anchor="start" font-family="Liberation Sans" stroke="#ffffff" stroke-width="1.8" stroke-opacity="0.85" paint-order="stroke">Jordana</text>
<text x="553.5" y="528" font-size="11" fill="#3e9b4d" font-style="italic" text-anchor="start" font-family="Liberation Sans" stroke="#ffffff" stroke-width="1.8" stroke-opacity="0.85" paint-order="stroke">a</text>
<text x="557" y="513.5" font-size="11" fill="#3e9b4d" font-style="italic" text-anchor="start" font-family="Liberation Sans" stroke="#ffffff" stroke-width="1.8" stroke-opacity="0.85" paint-order="stroke">nia</text>
<text x="553.5" y="542" font-size="11" fill="#3e9b4d" font-style="italic" text-anchor="start" font-family="Liberation Sans" stroke="#ffffff" stroke-width="1.8" stroke-opacity="0.85" paint-order="stroke">a</text>
<circle cx="796.6" cy="503.2" r="7" fill="#c8000f" stroke="#fff" stroke-width="0.8"/>
<path d="M792.4 503.2H800.8000000000001M796.6 499.0V507.4" stroke="#fff" stroke-width="1.9"/>
<circle cx="800.4" cy="571.4" r="7" fill="#c8000f" stroke="#fff" stroke-width="0.8"/>
<path d="M796.1999999999999 571.4H804.6M800.4 567.1999999999999V575.6" stroke="#fff" stroke-width="1.9"/>
<path d="M715.6 632.5 L706.5 624 A12.6 12.6 0 1 1 724.7 624 Z" fill="#fff"/>
<path d="M715.6 629.6 L708 622.5 A10.6 10.6 0 1 1 723.2 622.5 Z" fill="#f59e0b"/>
<circle cx="715.6" cy="615.3" r="1.6" fill="#fff"/>
<circle cx="715.6" cy="636.8" r="2.2" fill="#f59e0b"/>
</svg>
<div class="abs" style="left:11px;top:10.5px;width:33px;height:62px;border:2px solid rgba(0,0,0,0.2);border-radius:5px;background-clip:padding-box"></div>
<div class="abs" style="left:13px;top:12.5px;width:29px;height:28.5px;background:#fff;border-radius:3px 3px 0 0;border-bottom:1px solid #ccc"></div>
<div class="abs" style="left:13px;top:41px;width:29px;height:29.5px;background:#fff;border-radius:0 0 3px 3px"></div>
<div class="abs" style="left:22px;top:27.8px;width:11px;height:2.4px;background:#000"></div>
<div class="abs" style="left:26.3px;top:23.5px;width:2.4px;height:11px;background:#000"></div>
<div class="abs" style="left:22px;top:57.8px;width:11px;height:2.4px;background:#000"></div>
<div class="abs" style="left:361px;top:10.5px;width:33px;height:33px;border:2px solid rgba(0,0,0,0.2);border-radius:5px;background:#fff;background-clip:padding-box"></div>
<svg class="ic" style="left:370.5px;top:20px" width="14" height="14" viewBox="0 0 14 14"><path d="M7 0.5 L13 5.2 L7 9.9 L1 5.2Z" fill="#2b2b2b"/><path d="M1.2 7.4 L7 12 L12.8 7.4" fill="none" stroke="#2b2b2b" stroke-width="1.6"/></svg>
<div class="abs" style="left:254px;top:264px;width:151px;height:14px;background:rgba(255,255,255,0.8);border-top-left-radius:5px"></div>
<div class="abs" style="left:259px;top:267.3px;width:10px;height:3.3px;background:#4c7be0"></div>
<div class="abs" style="left:259px;top:270.6px;width:10px;height:3.3px;background:#ffd500"></div>
<div class="mt" style="left:271.5px;top:265.3px;font-size:10.3px;color:#0078a8">Leaflet</div>
<div class="abs" style="left:307.5px;top:264.8px;width:1px;height:11.2px;background:#333"></div>
<div class="mt" style="left:312px;top:265.3px;font-size:10.3px;color:#333">©</div>
<div class="mt" style="left:325.5px;top:265.3px;font-size:10.3px;color:#0078a8">OpenStreetMap</div>
</div>
<div class="abs" style="left:949.5px;top:496px;width:28px;height:28px;border-radius:50%;background:#10b981"></div>
<svg class="ic" style="left:955.5px;top:502px" width="16" height="16" viewBox="0 0 24 24"><path fill="#fff" d="M22.7 19l-9.1-9.1c.9-2.3.4-5-1.5-6.9-2-2-5-2.4-7.4-1.3L9 6 6 9 1.6 4.7C.4 7.1.9 10.1 2.9 12.1c1.9 1.9 4.6 2.4 6.9 1.5l9.1 9.1c.4.4 1 .4 1.4 0l2.3-2.3c.5-.4.5-1.1.1-1.4z"/></svg>
<div class="t" style="left:985.80px;top:492.10px;font-size:15px;color:#101828;font-weight:normal;letter-spacing:0.078px;-webkit-text-stroke:0.3px #101828;">Konserwacja klimatyzacji</div>
<div class="abs" style="left:985.5px;top:513.5px;width:16px;height:16px;border-radius:50%;background:#ff9800"></div>
<div class="t" style="left:988.50px;top:518.07px;font-size:7px;color:#fff;font-weight:bold;">PK</div>
<div class="t" style="left:1004.90px;top:514.90px;font-size:12.4px;color:#4a5565;font-weight:normal;letter-spacing:0.090px;-webkit-text-stroke:0.15px #4a5565;">Piotr</div>
<svg class="ic" style="left:1042px;top:514.5px" width="11" height="13" viewBox="0 0 11 13"><rect x="4.6" y="5" width="1.6" height="8" fill="#9ca3af"/><circle cx="5.4" cy="4.2" r="3.9" fill="#e0313f"/><circle cx="4.2" cy="3" r="1.1" fill="#f5a0a6"/></svg>
<div class="t" style="left:1056.40px;top:514.90px;font-size:12.4px;color:#4a5565;font-weight:normal;letter-spacing:0.082px;-webkit-text-stroke:0.15px #4a5565;">Antoni Nowak</div>
</div></body></html>
